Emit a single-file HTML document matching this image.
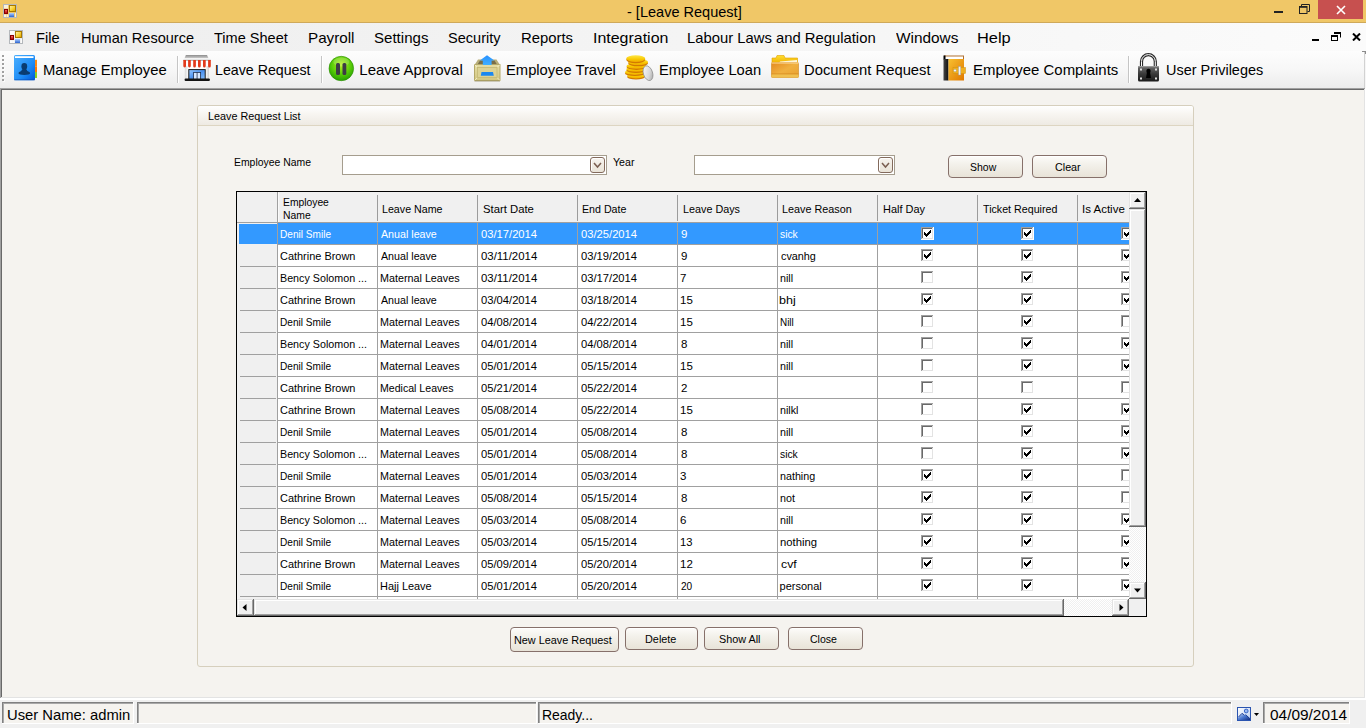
<!DOCTYPE html>
<html><head><meta charset="utf-8"><title>Leave Request</title>
<style>
html,body{margin:0;padding:0}
body{width:1366px;height:728px;overflow:hidden;position:relative;background:#f5f3ef;font-family:"Liberation Sans",sans-serif}
.t{position:absolute;white-space:pre;line-height:40px;transform-origin:0 0;font-family:"Liberation Sans",sans-serif}
</style></head><body>
<div style="position:absolute;left:0px;top:0px;width:1366px;height:22px;background:#f0c767"></div>
<div style="position:absolute;left:0px;top:22px;width:1366px;height:1px;background:#cfa95a"></div>
<svg style="position:absolute;left:3px;top:4px" width="14" height="14" viewBox="0 0 14 14">
<defs><linearGradient id="gy3" x1="0" y1="0" x2="1" y2="1"><stop offset="0" stop-color="#fff4b0"/><stop offset="0.55" stop-color="#f8d030"/><stop offset="1" stop-color="#d89c00"/></linearGradient>
<linearGradient id="gb3" x1="0" y1="0" x2="0" y2="1"><stop offset="0" stop-color="#b0d0ff"/><stop offset="1" stop-color="#2c64d0"/></linearGradient>
<linearGradient id="gr3" x1="0" y1="0" x2="0" y2="1"><stop offset="0" stop-color="#ff7070"/><stop offset="1" stop-color="#a80000"/></linearGradient></defs>
<rect x="0.5" y="0.5" width="13" height="13" fill="#ecc670" stroke="#b4b8bc" stroke-width="1"/>
<rect x="1" y="1" width="4" height="3.5" fill="#fff" opacity="0.75"/>
<rect x="1" y="10.5" width="2.5" height="2.5" fill="#fff" opacity="0.75"/><rect x="4" y="10.5" width="1.3" height="2.5" fill="#fff" opacity="0.75"/>
<rect x="12" y="9" width="1" height="4" fill="#fff" opacity="0.75"/>
<rect x="6.5" y="1.5" width="6" height="6" fill="url(#gy3)" stroke="#a87800" stroke-width="1"/>
<rect x="1.5" y="5.5" width="3" height="4" fill="url(#gr3)" stroke="#880000" stroke-width="1"/>
<rect x="6" y="9" width="5" height="4" fill="url(#gb3)"/>
</svg>
<div style="position:absolute;left:1274px;top:11px;width:9px;height:2px;background:#222"></div>
<svg style="position:absolute;left:1299px;top:4px" width="11" height="10" viewBox="0 0 11 10">
<path d="M2.5 2 V0.5 H10.5 V7.5 H8.5" fill="none" stroke="#222" stroke-width="1"/>
<rect x="0.5" y="2.5" width="7.5" height="7" fill="none" stroke="#222" stroke-width="1"/><rect x="0.5" y="2.5" width="7.5" height="1.3" fill="#222"/>
</svg>
<div style="position:absolute;left:1318px;top:0px;width:45px;height:19px;background:#c7504f"></div>
<svg style="position:absolute;left:1336px;top:5px" width="10" height="10" viewBox="0 0 10 10">
<path d="M1 1 L9 9 M9 1 L1 9" stroke="#fff" stroke-width="1.6"/></svg>
<div style="position:absolute;left:0px;top:23px;width:1366px;height:28px;background:linear-gradient(to right,#eeeeee,#f4f4f4 50%,#fbfbfb)"></div>
<svg style="position:absolute;left:9px;top:30px" width="14" height="14" viewBox="0 0 14 14">
<defs><linearGradient id="gy9" x1="0" y1="0" x2="1" y2="1"><stop offset="0" stop-color="#fff4b0"/><stop offset="0.55" stop-color="#f8d030"/><stop offset="1" stop-color="#d89c00"/></linearGradient>
<linearGradient id="gb9" x1="0" y1="0" x2="0" y2="1"><stop offset="0" stop-color="#b0d0ff"/><stop offset="1" stop-color="#2c64d0"/></linearGradient>
<linearGradient id="gr9" x1="0" y1="0" x2="0" y2="1"><stop offset="0" stop-color="#ff7070"/><stop offset="1" stop-color="#a80000"/></linearGradient></defs>
<rect x="0.5" y="0.5" width="13" height="13" fill="#efefef" stroke="#b4b8bc" stroke-width="1"/>
<rect x="1" y="1" width="4" height="3.5" fill="#fff" opacity="0.75"/>
<rect x="1" y="10.5" width="2.5" height="2.5" fill="#fff" opacity="0.75"/><rect x="4" y="10.5" width="1.3" height="2.5" fill="#fff" opacity="0.75"/>
<rect x="12" y="9" width="1" height="4" fill="#fff" opacity="0.75"/>
<rect x="6.5" y="1.5" width="6" height="6" fill="url(#gy9)" stroke="#a87800" stroke-width="1"/>
<rect x="1.5" y="5.5" width="3" height="4" fill="url(#gr9)" stroke="#880000" stroke-width="1"/>
<rect x="6" y="9" width="5" height="4" fill="url(#gb9)"/>
</svg>
<div style="position:absolute;left:1312px;top:39px;width:7px;height:2px;background:#000"></div>
<svg style="position:absolute;left:1331px;top:32px" width="10" height="9" viewBox="0 0 10 9">
<path d="M3 0.5 H9.5 V5.5" fill="none" stroke="#000" stroke-width="1"/><rect x="3" y="0" width="7" height="2" fill="#000"/>
<rect x="0.5" y="3.5" width="6" height="5" fill="none" stroke="#000" stroke-width="1"/><rect x="0" y="3" width="7" height="2" fill="#000"/>
</svg>
<svg style="position:absolute;left:1352px;top:33px" width="9" height="8" viewBox="0 0 9 8">
<path d="M1 0.5 L8 7.5 M8 0.5 L1 7.5" stroke="#000" stroke-width="2"/></svg>
<div style="position:absolute;left:0;top:51px;width:1365px;height:37px;background:linear-gradient(#fdfdfd,#f7f7f7 50%,#ececec);border-top-right-radius:3px"></div>
<div style="position:absolute;left:0px;top:88px;width:1366px;height:1px;background:#a0a0a0"></div>
<div style="position:absolute;left:1364px;top:52px;width:1px;height:36px;background:#d2d2d2"></div>
<div style="position:absolute;left:1365px;top:54px;width:1px;height:34px;background:#f6f6f6"></div>
<div style="position:absolute;left:1362px;top:51px;width:4px;height:1px;background:#8c8c8c"></div>
<div style="position:absolute;left:1365px;top:51px;width:1px;height:3px;background:#8c8c8c"></div>
<div style="position:absolute;left:2px;top:55px;width:2px;height:2px;background:#a0a0a0"></div>
<div style="position:absolute;left:3px;top:56px;width:2px;height:2px;background:#fff;opacity:.7"></div>
<div style="position:absolute;left:2px;top:55px;width:2px;height:2px;background:#a0a0a0"></div>
<div style="position:absolute;left:2px;top:59px;width:2px;height:2px;background:#a0a0a0"></div>
<div style="position:absolute;left:3px;top:60px;width:2px;height:2px;background:#fff;opacity:.7"></div>
<div style="position:absolute;left:2px;top:59px;width:2px;height:2px;background:#a0a0a0"></div>
<div style="position:absolute;left:2px;top:63px;width:2px;height:2px;background:#a0a0a0"></div>
<div style="position:absolute;left:3px;top:64px;width:2px;height:2px;background:#fff;opacity:.7"></div>
<div style="position:absolute;left:2px;top:63px;width:2px;height:2px;background:#a0a0a0"></div>
<div style="position:absolute;left:2px;top:67px;width:2px;height:2px;background:#a0a0a0"></div>
<div style="position:absolute;left:3px;top:68px;width:2px;height:2px;background:#fff;opacity:.7"></div>
<div style="position:absolute;left:2px;top:67px;width:2px;height:2px;background:#a0a0a0"></div>
<div style="position:absolute;left:2px;top:71px;width:2px;height:2px;background:#a0a0a0"></div>
<div style="position:absolute;left:3px;top:72px;width:2px;height:2px;background:#fff;opacity:.7"></div>
<div style="position:absolute;left:2px;top:71px;width:2px;height:2px;background:#a0a0a0"></div>
<div style="position:absolute;left:2px;top:75px;width:2px;height:2px;background:#a0a0a0"></div>
<div style="position:absolute;left:3px;top:76px;width:2px;height:2px;background:#fff;opacity:.7"></div>
<div style="position:absolute;left:2px;top:75px;width:2px;height:2px;background:#a0a0a0"></div>
<div style="position:absolute;left:2px;top:79px;width:2px;height:2px;background:#a0a0a0"></div>
<div style="position:absolute;left:3px;top:80px;width:2px;height:2px;background:#fff;opacity:.7"></div>
<div style="position:absolute;left:2px;top:79px;width:2px;height:2px;background:#a0a0a0"></div>
<div style="position:absolute;left:177px;top:56px;width:1px;height:27px;background:#c5c5c5"></div>
<div style="position:absolute;left:178px;top:56px;width:1px;height:27px;background:#fff"></div>
<div style="position:absolute;left:321px;top:56px;width:1px;height:27px;background:#c5c5c5"></div>
<div style="position:absolute;left:322px;top:56px;width:1px;height:27px;background:#fff"></div>
<div style="position:absolute;left:1128px;top:56px;width:1px;height:27px;background:#c5c5c5"></div>
<div style="position:absolute;left:1129px;top:56px;width:1px;height:27px;background:#fff"></div>
<svg style="position:absolute;left:13px;top:54px" width="26" height="28" viewBox="0 0 26 28">
<defs><linearGradient id="bk1" x1="0" y1="0" x2="1" y2="1"><stop offset="0" stop-color="#4cb0ff"/><stop offset="0.6" stop-color="#1e8cf5"/><stop offset="1" stop-color="#0058d8"/></linearGradient></defs>
<rect x="21.8" y="5.8" width="2.2" height="6.5" fill="#ff8a10"/><rect x="21.8" y="12.3" width="2.2" height="5.8" fill="#ff7a00"/><rect x="21.8" y="18" width="2.2" height="6" fill="#8cd020"/>
<rect x="1" y="1" width="21" height="25.3" rx="1.5" fill="url(#bk1)"/>
<rect x="2" y="2.2" width="18.5" height="1.8" fill="#fff"/>
<rect x="1" y="25.3" width="21" height="1" fill="#0a48b0" opacity="0.6"/>
<ellipse cx="11.3" cy="12.4" rx="2.9" ry="3.3" fill="#0a3c70"/>
<path d="M11.3 14.8 C9 14.8 8.6 16.2 8.3 17 C6.8 17.5 5.5 18.3 5.5 19.3 C5.5 20.3 8 20.9 11.3 20.9 C14.6 20.9 17.1 20.3 17.1 19.3 C17.1 18.3 15.8 17.5 14.3 17 C14 16.2 13.6 14.8 11.3 14.8 Z" fill="#0a3c70"/>
</svg>
<svg style="position:absolute;left:183px;top:55px" width="28" height="27" viewBox="0 0 28 27">
<defs><linearGradient id="st1" x1="0" y1="0" x2="0" y2="1"><stop offset="0" stop-color="#8c8c8c"/><stop offset="1" stop-color="#cfcfcf"/></linearGradient>
<linearGradient id="st2" x1="0" y1="0" x2="1" y2="1"><stop offset="0" stop-color="#9ccbff"/><stop offset="0.5" stop-color="#4a90ee"/><stop offset="1" stop-color="#8cc4ff"/></linearGradient>
<linearGradient id="st3" x1="0" y1="0" x2="1" y2="0"><stop offset="0" stop-color="#d8d8d8"/><stop offset="0.15" stop-color="#ffffff"/><stop offset="0.85" stop-color="#ffffff"/><stop offset="1" stop-color="#d0d0d0"/></linearGradient></defs>
<path d="M2.9 0 H24 L25.5 3.3 H1.5 Z" fill="url(#st1)"/>
<rect x="1" y="3.3" width="26" height="1.4" fill="#f4f4f4"/>
<rect x="1.8" y="11" width="24.2" height="13" fill="url(#st3)"/>
<rect x="0.3" y="4.7" width="27.5" height="6.3" fill="#ffffff"/>
<rect x="0.3" y="4.7" width="27.5" height="1.3" fill="#9a9a9a" opacity="0.7"/>
<path d="M0.3 5 h2.7 v6 a1.35 1.5 0 0 1 -2.7 0 Z" fill="#e23a1c"/><path d="M5.1 5 h2.7 v6 a1.35 1.5 0 0 1 -2.7 0 Z" fill="#e23a1c"/><path d="M10.2 5 h2.7 v6 a1.35 1.5 0 0 1 -2.7 0 Z" fill="#e23a1c"/><path d="M15.0 5 h2.7 v6 a1.35 1.5 0 0 1 -2.7 0 Z" fill="#e23a1c"/><path d="M20.0 5 h2.7 v6 a1.35 1.5 0 0 1 -2.7 0 Z" fill="#e23a1c"/><path d="M25.1 5 h2.7 v6 a1.35 1.5 0 0 1 -2.7 0 Z" fill="#e23a1c"/>
<rect x="5.8" y="14.6" width="16.4" height="10" fill="url(#st2)" stroke="#1a1a1a" stroke-width="1"/>
<rect x="10.6" y="17.4" width="7" height="7.2" fill="#d8e8ff" stroke="#203050" stroke-width="0.8"/>
<path d="M14.1 17.4 V24.6" stroke="#203050" stroke-width="0.8"/>
<rect x="1.6" y="23.4" width="25.3" height="2.6" rx="1" fill="#141414"/>
</svg>
<svg style="position:absolute;left:327px;top:54px" width="28" height="28" viewBox="0 0 28 28">
<defs><radialGradient id="gp1" cx="0.5" cy="0.35" r="0.7"><stop offset="0" stop-color="#b8f020"/><stop offset="0.55" stop-color="#58cc08"/><stop offset="1" stop-color="#1c9a00"/></radialGradient></defs>
<ellipse cx="14.3" cy="14.5" rx="12.3" ry="12.2" fill="url(#gp1)" stroke="#2a8c00" stroke-width="0.6"/>
<ellipse cx="14.3" cy="8" rx="8" ry="4.5" fill="#fff" opacity="0.18"/>
<rect x="9" y="9" width="4" height="12" rx="1.5" fill="#3c3c44"/>
<rect x="15.5" y="9" width="3.8" height="12" rx="1.5" fill="#3c3c44"/>
</svg>
<svg style="position:absolute;left:474px;top:55px" width="27" height="27" viewBox="0 0 27 27">
<defs><linearGradient id="tb1" x1="0" y1="0" x2="0" y2="1"><stop offset="0" stop-color="#e6dea4"/><stop offset="1" stop-color="#d2c680"/></linearGradient>
<linearGradient id="tb2" x1="0" y1="0" x2="0" y2="1"><stop offset="0" stop-color="#2890ff"/><stop offset="1" stop-color="#40b0ff"/></linearGradient></defs>
<path d="M4 4.5 L0.5 10 H26 L22.5 4.5 Z" fill="#b8ae78"/>
<path d="M6 5.5 L3.5 9.5 H23 L20.5 5.5 Z" fill="#7a6e48"/>
<rect x="0.5" y="9.5" width="25.5" height="16" fill="url(#tb1)" stroke="#b4a868" stroke-width="1"/>
<path d="M0.5 9.5 L3.5 12.5 M26 9.5 L23 12.5 M0.5 25.5 L3.5 22.5 M26 25.5 L23 22.5" stroke="#f4f0d0" stroke-width="0.8"/>
<rect x="3.5" y="12.5" width="19.5" height="10" fill="#dcd294" stroke="#c4b874" stroke-width="0.8"/>
<path d="M13 0.2 L20.4 5.6 H17.6 V10 H8.8 V5.6 H5.8 Z" fill="url(#tb2)"/>
<path d="M7.5 17 H19 L19.8 20.8 H6.8 Z" fill="#1a88f0"/>
<rect x="0.5" y="25.5" width="25.5" height="1.2" fill="#8a8058" opacity="0.5"/>
</svg>
<svg style="position:absolute;left:624px;top:54px" width="31" height="29" viewBox="0 0 31 29">
<defs><linearGradient id="cg1" x1="0" y1="0" x2="0" y2="1"><stop offset="0" stop-color="#ffe84a"/><stop offset="0.6" stop-color="#f8c800"/><stop offset="1" stop-color="#f0a800"/></linearGradient>
<linearGradient id="cs1" x1="0" y1="0" x2="1" y2="1"><stop offset="0" stop-color="#ffffff"/><stop offset="0.6" stop-color="#d8d8d8"/><stop offset="1" stop-color="#9a9a9a"/></linearGradient></defs>
<ellipse cx="12" cy="22.9" rx="8.8" ry="2.7" fill="#d27a00"/><ellipse cx="12" cy="21.7" rx="8.8" ry="2.7" fill="url(#cg1)"/><ellipse cx="10.9" cy="19.4" rx="9.9" ry="2.7" fill="#d27a00"/><ellipse cx="10.9" cy="18.2" rx="9.9" ry="2.7" fill="url(#cg1)"/><ellipse cx="12" cy="16.3" rx="9.7" ry="2.7" fill="#d27a00"/><ellipse cx="12" cy="15.1" rx="9.7" ry="2.7" fill="url(#cg1)"/><ellipse cx="12.5" cy="13.1" rx="10" ry="2.8" fill="#d27a00"/><ellipse cx="12.5" cy="11.9" rx="10" ry="2.8" fill="url(#cg1)"/><ellipse cx="14.1" cy="9.2" rx="9.9" ry="3.1" fill="#d27a00"/><ellipse cx="14.1" cy="8" rx="9.9" ry="3.1" fill="url(#cg1)"/><ellipse cx="11.75" cy="5.8" rx="9.5" ry="3.4" fill="#d27a00"/><ellipse cx="11.75" cy="4.6" rx="9.5" ry="3.4" fill="url(#cg1)"/>
<ellipse cx="24" cy="19.2" rx="4.6" ry="7.6" transform="rotate(-18 24 19.2)" fill="url(#cs1)" stroke="#8a8a8a" stroke-width="0.7"/>
</svg>
<svg style="position:absolute;left:771px;top:55px" width="28" height="24" viewBox="0 0 28 24">
<defs><linearGradient id="fd1" x1="0" y1="0" x2="0" y2="1"><stop offset="0" stop-color="#ffe030"/><stop offset="1" stop-color="#f0b000"/></linearGradient>
<linearGradient id="fd2" x1="0" y1="0" x2="1" y2="1"><stop offset="0" stop-color="#e48a20"/><stop offset="0.5" stop-color="#f0b040"/><stop offset="1" stop-color="#e8a030"/></linearGradient></defs>
<path d="M1 3 H5 L6 0.5 H13 L14 3 H26.5 V8 H1 Z" fill="url(#fd1)" stroke="#e0a000" stroke-width="0.6"/>
<path d="M9 6.5 L26 5 V8 H8 Z" fill="#fff" opacity="0.85"/>
<rect x="0.5" y="7.5" width="27" height="15" rx="1" fill="url(#fd2)" stroke="#d08820" stroke-width="0.6"/>
<rect x="0.5" y="7.5" width="27" height="1" fill="#ffe0a0"/>
<rect x="0.5" y="18.5" width="27" height="1" fill="#c87810" opacity="0.6"/>
<rect x="0.5" y="19.5" width="27" height="3" fill="#f0c050"/>
</svg>
<svg style="position:absolute;left:943px;top:55px" width="24" height="27" viewBox="0 0 24 27">
<defs><linearGradient id="cb1" x1="0" y1="0" x2="1" y2="1"><stop offset="0" stop-color="#f8c030"/><stop offset="1" stop-color="#e07800"/></linearGradient>
<linearGradient id="cb2" x1="0" y1="0" x2="1" y2="0"><stop offset="0" stop-color="#444"/><stop offset="1" stop-color="#111"/></linearGradient></defs>
<rect x="1" y="0.5" width="20" height="4" fill="#b07030"/>
<rect x="2" y="1.5" width="18" height="2.5" fill="#fff"/>
<rect x="0.5" y="0.5" width="2" height="4" fill="#000"/>
<rect x="0.5" y="4" width="5" height="21.5" fill="url(#cb2)"/>
<rect x="5.5" y="4" width="15.5" height="21.5" fill="url(#cb1)"/>
<rect x="10" y="12.5" width="12.5" height="6" fill="#f0b020" stroke="#d09010" stroke-width="0.5"/>
<circle cx="12" cy="15.5" r="1.3" fill="#fff" stroke="#888" stroke-width="0.4"/>
<rect x="15.5" y="11.5" width="2.2" height="8.5" fill="#f4f4f4" stroke="#999" stroke-width="0.4"/>
</svg>
<svg style="position:absolute;left:1137px;top:53px" width="23" height="29" viewBox="0 0 23 29">
<defs><linearGradient id="lk1" x1="0" y1="0" x2="0" y2="1"><stop offset="0" stop-color="#707070"/><stop offset="0.5" stop-color="#3a3a3a"/><stop offset="1" stop-color="#1a1a1a"/></linearGradient></defs>
<path d="M4.5 13 V8.5 A6.8 6.8 0 0 1 18.3 8.5 V13" fill="none" stroke="#2a2a2a" stroke-width="3.2"/>
<path d="M4.5 13 V8.5 A6.8 6.8 0 0 1 18.3 8.5 V13" fill="none" stroke="#fff" stroke-width="1"/>
<rect x="1" y="13" width="21" height="15.5" rx="1.5" fill="url(#lk1)"/>
<rect x="1" y="13" width="21" height="1.2" fill="#999"/>
<rect x="3" y="15.5" width="2" height="2" fill="#ddd"/><rect x="18" y="15.5" width="2" height="2" fill="#ddd"/>
<rect x="3" y="24.5" width="2" height="2" fill="#ddd"/><rect x="18" y="24.5" width="2" height="2" fill="#ddd"/>
<circle cx="11.5" cy="18" r="2.2" fill="#000"/><path d="M10 19 L9 25 H14 L13 19 Z" fill="#000"/>
</svg>
<div style="position:absolute;left:0px;top:89px;width:1366px;height:610px;background:#f5f3ef"></div>
<div style="position:absolute;left:0px;top:88px;width:1365px;height:1px;background:#a0a0a0"></div>
<div style="position:absolute;left:0px;top:88px;width:1px;height:610px;background:#a0a0a0"></div>
<div style="position:absolute;left:1px;top:89px;width:1364px;height:1px;background:#696969"></div>
<div style="position:absolute;left:1px;top:89px;width:1px;height:608px;background:#696969"></div>
<div style="position:absolute;left:1365px;top:88px;width:1px;height:611px;background:#fff"></div>
<div style="position:absolute;left:0px;top:698px;width:1366px;height:2px;background:#fff"></div>
<div style="position:absolute;left:1364px;top:89px;width:1px;height:609px;background:#e3e3e3"></div>
<div style="position:absolute;left:1px;top:697px;width:1364px;height:1px;background:#e3e3e3"></div>
<div style="position:absolute;left:197px;top:105px;width:995px;height:560px;border:1px solid #d6cfbd;border-radius:3px;background:#f5f3ef"></div>
<div style="position:absolute;left:198px;top:106px;width:995px;height:19px;border-radius:2px 2px 0 0;background:linear-gradient(#ffffff,#f8f6f2 40%,#eeeae3)"></div>
<div style="position:absolute;left:198px;top:125px;width:995px;height:1px;background:#ddd5c2"></div>
<div style="position:absolute;left:342px;top:155px;width:263px;height:18px;border:1px solid #a59d8e;background:#fff"></div>
<div style="position:absolute;left:590px;top:157px;width:13px;height:14px;border:1px solid #836a5c;border-radius:3px;background:linear-gradient(#f6f3ee,#e9e3d7);box-shadow:inset 1px 1px 0 #fff"></div>
<svg style="position:absolute;left:593px;top:162px" width="10" height="7" viewBox="0 0 10 7"><path d="M1 1 L4.5 5 L8 1" fill="none" stroke="#7a5e50" stroke-width="1.5"/></svg>
<div style="position:absolute;left:694px;top:155px;width:199px;height:18px;border:1px solid #a59d8e;background:#fff"></div>
<div style="position:absolute;left:878px;top:157px;width:13px;height:14px;border:1px solid #836a5c;border-radius:3px;background:linear-gradient(#f6f3ee,#e9e3d7);box-shadow:inset 1px 1px 0 #fff"></div>
<svg style="position:absolute;left:881px;top:162px" width="10" height="7" viewBox="0 0 10 7"><path d="M1 1 L4.5 5 L8 1" fill="none" stroke="#7a5e50" stroke-width="1.5"/></svg>
<div style="position:absolute;left:948px;top:155px;width:73px;height:21px;border:1px solid #86706a;border-radius:4px;background:linear-gradient(#fdfcfa,#f4f2ec 35%,#e8e3d8);box-shadow:inset 0 1px 0 #fff"></div>
<div style="position:absolute;left:1032px;top:155px;width:73px;height:21px;border:1px solid #86706a;border-radius:4px;background:linear-gradient(#fdfcfa,#f4f2ec 35%,#e8e3d8);box-shadow:inset 0 1px 0 #fff"></div>
<div style="position:absolute;left:510px;top:627px;width:107px;height:23px;border:1px solid #86706a;border-radius:4px;background:linear-gradient(#fdfcfa,#f4f2ec 35%,#e8e3d8);box-shadow:inset 0 1px 0 #fff"></div>
<div style="position:absolute;left:625px;top:627px;width:71px;height:21px;border:1px solid #86706a;border-radius:4px;background:linear-gradient(#fdfcfa,#f4f2ec 35%,#e8e3d8);box-shadow:inset 0 1px 0 #fff"></div>
<div style="position:absolute;left:704px;top:627px;width:73px;height:21px;border:1px solid #86706a;border-radius:4px;background:linear-gradient(#fdfcfa,#f4f2ec 35%,#e8e3d8);box-shadow:inset 0 1px 0 #fff"></div>
<div style="position:absolute;left:788px;top:627px;width:73px;height:21px;border:1px solid #86706a;border-radius:4px;background:linear-gradient(#fdfcfa,#f4f2ec 35%,#e8e3d8);box-shadow:inset 0 1px 0 #fff"></div>
<div style="position:absolute;left:236px;top:191px;width:911px;height:426px;background:#000"></div>
<div style="position:absolute;left:237px;top:192px;width:909px;height:424px;background:#fff"></div>
<div style="position:absolute;left:237px;top:192px;width:892px;height:407px;overflow:hidden">
<div style="position:absolute;left:0px;top:0px;width:1000px;height:30px;background:#f0f0f0"></div>
<div style="position:absolute;left:0px;top:30px;width:1000px;height:1px;background:#a0a0a0"></div>
<div style="position:absolute;left:40px;top:0px;width:1px;height:30px;background:#a0a0a0"></div>
<div style="position:absolute;left:41px;top:0px;width:1px;height:30px;background:#fafafa"></div>
<div style="position:absolute;left:140px;top:3px;width:1px;height:26px;background:#9c9c9c"></div>
<div style="position:absolute;left:240px;top:3px;width:1px;height:26px;background:#9c9c9c"></div>
<div style="position:absolute;left:340px;top:3px;width:1px;height:26px;background:#9c9c9c"></div>
<div style="position:absolute;left:440px;top:3px;width:1px;height:26px;background:#9c9c9c"></div>
<div style="position:absolute;left:540px;top:3px;width:1px;height:26px;background:#9c9c9c"></div>
<div style="position:absolute;left:640px;top:3px;width:1px;height:26px;background:#9c9c9c"></div>
<div style="position:absolute;left:740px;top:3px;width:1px;height:26px;background:#9c9c9c"></div>
<div style="position:absolute;left:840px;top:3px;width:1px;height:26px;background:#9c9c9c"></div>
<div class="t" style="left:45.86px;top:-10px;font-size:11px;color:#000;transform:scaleX(0.9375)">Employee</div>
<div class="t" style="left:45.86px;top:3px;font-size:11px;color:#000;transform:scaleX(0.9429)">Name</div>
<div class="t" style="left:145.13px;top:-3px;font-size:11px;color:#000;transform:scaleX(0.9705)">Leave Name</div>
<div class="t" style="left:245.57px;top:-3px;font-size:11px;color:#000;transform:scaleX(1.0271)">Start Date</div>
<div class="t" style="left:345.43px;top:-3px;font-size:11px;color:#000;transform:scaleX(0.9689)">End Date</div>
<div class="t" style="left:445.62px;top:-3px;font-size:11px;color:#000;transform:scaleX(0.9807)">Leave Days</div>
<div class="t" style="left:545.42px;top:-3px;font-size:11px;color:#000;transform:scaleX(0.9826)">Leave Reason</div>
<div class="t" style="left:645.50px;top:-3px;font-size:11px;color:#000;transform:scaleX(0.9951)">Half Day</div>
<div class="t" style="left:746.20px;top:-3px;font-size:11px;color:#000;transform:scaleX(0.9711)">Ticket Required</div>
<div class="t" style="left:845.25px;top:-3px;font-size:11px;color:#000;transform:scaleX(1.0450)">Is Active</div>
<div style="position:absolute;left:0px;top:31px;width:40px;height:380px;background:#f0f0f0"></div>
<div style="position:absolute;left:41px;top:31px;width:900px;height:21px;background:#3399ff"></div>
<div style="position:absolute;left:2px;top:32px;width:38px;height:20px;background:#3399ff"></div>
<div style="position:absolute;left:41px;top:52px;width:900px;height:1px;background:#a0a0a0"></div>
<div style="position:absolute;left:40px;top:31px;width:1px;height:22px;background:#a0a0a0"></div>
<div style="position:absolute;left:140px;top:31px;width:1px;height:22px;background:#a0a0a0"></div>
<div style="position:absolute;left:240px;top:31px;width:1px;height:22px;background:#a0a0a0"></div>
<div style="position:absolute;left:340px;top:31px;width:1px;height:22px;background:#a0a0a0"></div>
<div style="position:absolute;left:440px;top:31px;width:1px;height:22px;background:#a0a0a0"></div>
<div style="position:absolute;left:540px;top:31px;width:1px;height:22px;background:#a0a0a0"></div>
<div style="position:absolute;left:640px;top:31px;width:1px;height:22px;background:#a0a0a0"></div>
<div style="position:absolute;left:740px;top:31px;width:1px;height:22px;background:#a0a0a0"></div>
<div style="position:absolute;left:840px;top:31px;width:1px;height:22px;background:#a0a0a0"></div>
<div class="t" style="left:42.78px;top:22px;font-size:11px;color:#fff;transform:scaleX(0.9167)">Denil Smile</div>
<div class="t" style="left:143.50px;top:22px;font-size:11px;color:#fff;transform:scaleX(0.9702)">Anual leave</div>
<div class="t" style="left:243.80px;top:22px;font-size:11px;color:#fff;transform:scaleX(1.0182)">03/17/2014</div>
<div class="t" style="left:343.80px;top:22px;font-size:11px;color:#fff;transform:scaleX(1.0182)">03/25/2014</div>
<div class="t" style="left:444.30px;top:22px;font-size:11px;color:#fff;transform:scaleX(1.0450)">9</div>
<div class="t" style="left:542.66px;top:22px;font-size:11px;color:#fff;transform:scaleX(0.9389)">sick</div>
<svg style="position:absolute;left:684px;top:35px" width="13" height="13" viewBox="0 0 13 13">
<rect x="0" y="0" width="13" height="13" fill="#fff"/>
<rect x="0" y="0" width="12" height="1" fill="#a0a0a0"/><rect x="0" y="0" width="1" height="12" fill="#a0a0a0"/>
<rect x="1" y="1" width="10" height="1" fill="#696969"/><rect x="1" y="1" width="1" height="10" fill="#696969"/>
<rect x="1" y="11" width="11" height="1" fill="#e3e3e3"/><rect x="11" y="1" width="1" height="11" fill="#e3e3e3"/>
<g transform="translate(3,3)"><path d="M0 2h1v3h-1zM1 3h1v3h-1zM2 4h1v3h-1zM3 3h1v3h-1zM4 2h1v3h-1zM5 1h1v3h-1zM6 0h1v3h-1z" fill="#000"/></g>
</svg>
<svg style="position:absolute;left:784px;top:35px" width="13" height="13" viewBox="0 0 13 13">
<rect x="0" y="0" width="13" height="13" fill="#fff"/>
<rect x="0" y="0" width="12" height="1" fill="#a0a0a0"/><rect x="0" y="0" width="1" height="12" fill="#a0a0a0"/>
<rect x="1" y="1" width="10" height="1" fill="#696969"/><rect x="1" y="1" width="1" height="10" fill="#696969"/>
<rect x="1" y="11" width="11" height="1" fill="#e3e3e3"/><rect x="11" y="1" width="1" height="11" fill="#e3e3e3"/>
<g transform="translate(3,3)"><path d="M0 2h1v3h-1zM1 3h1v3h-1zM2 4h1v3h-1zM3 3h1v3h-1zM4 2h1v3h-1zM5 1h1v3h-1zM6 0h1v3h-1z" fill="#000"/></g>
</svg>
<svg style="position:absolute;left:884px;top:35px" width="13" height="13" viewBox="0 0 13 13">
<rect x="0" y="0" width="13" height="13" fill="#fff"/>
<rect x="0" y="0" width="12" height="1" fill="#a0a0a0"/><rect x="0" y="0" width="1" height="12" fill="#a0a0a0"/>
<rect x="1" y="1" width="10" height="1" fill="#696969"/><rect x="1" y="1" width="1" height="10" fill="#696969"/>
<rect x="1" y="11" width="11" height="1" fill="#e3e3e3"/><rect x="11" y="1" width="1" height="11" fill="#e3e3e3"/>
<g transform="translate(3,3)"><path d="M0 2h1v3h-1zM1 3h1v3h-1zM2 4h1v3h-1zM3 3h1v3h-1zM4 2h1v3h-1zM5 1h1v3h-1zM6 0h1v3h-1z" fill="#000"/></g>
</svg>
<div style="position:absolute;left:41px;top:74px;width:900px;height:1px;background:#a0a0a0"></div>
<div style="position:absolute;left:3px;top:74px;width:36px;height:1px;background:#a0a0a0"></div>
<div style="position:absolute;left:40px;top:53px;width:1px;height:22px;background:#a0a0a0"></div>
<div style="position:absolute;left:140px;top:53px;width:1px;height:22px;background:#a0a0a0"></div>
<div style="position:absolute;left:240px;top:53px;width:1px;height:22px;background:#a0a0a0"></div>
<div style="position:absolute;left:340px;top:53px;width:1px;height:22px;background:#a0a0a0"></div>
<div style="position:absolute;left:440px;top:53px;width:1px;height:22px;background:#a0a0a0"></div>
<div style="position:absolute;left:540px;top:53px;width:1px;height:22px;background:#a0a0a0"></div>
<div style="position:absolute;left:640px;top:53px;width:1px;height:22px;background:#a0a0a0"></div>
<div style="position:absolute;left:740px;top:53px;width:1px;height:22px;background:#a0a0a0"></div>
<div style="position:absolute;left:840px;top:53px;width:1px;height:22px;background:#a0a0a0"></div>
<div class="t" style="left:42.71px;top:44px;font-size:11px;color:#000;transform:scaleX(0.9946)">Cathrine Brown</div>
<div class="t" style="left:143.50px;top:44px;font-size:11px;color:#000;transform:scaleX(0.9702)">Anual leave</div>
<div class="t" style="left:243.80px;top:44px;font-size:11px;color:#000;transform:scaleX(1.0370)">03/11/2014</div>
<div class="t" style="left:343.80px;top:44px;font-size:11px;color:#000;transform:scaleX(1.0182)">03/19/2014</div>
<div class="t" style="left:444.30px;top:44px;font-size:11px;color:#000;transform:scaleX(1.0450)">9</div>
<div class="t" style="left:543.60px;top:44px;font-size:11px;color:#000;transform:scaleX(0.9829)">cvanhg</div>
<svg style="position:absolute;left:684px;top:57px" width="13" height="13" viewBox="0 0 13 13">
<rect x="0" y="0" width="13" height="13" fill="#fff"/>
<rect x="0" y="0" width="12" height="1" fill="#a0a0a0"/><rect x="0" y="0" width="1" height="12" fill="#a0a0a0"/>
<rect x="1" y="1" width="10" height="1" fill="#696969"/><rect x="1" y="1" width="1" height="10" fill="#696969"/>
<rect x="1" y="11" width="11" height="1" fill="#e3e3e3"/><rect x="11" y="1" width="1" height="11" fill="#e3e3e3"/>
<g transform="translate(3,3)"><path d="M0 2h1v3h-1zM1 3h1v3h-1zM2 4h1v3h-1zM3 3h1v3h-1zM4 2h1v3h-1zM5 1h1v3h-1zM6 0h1v3h-1z" fill="#000"/></g>
</svg>
<svg style="position:absolute;left:784px;top:57px" width="13" height="13" viewBox="0 0 13 13">
<rect x="0" y="0" width="13" height="13" fill="#fff"/>
<rect x="0" y="0" width="12" height="1" fill="#a0a0a0"/><rect x="0" y="0" width="1" height="12" fill="#a0a0a0"/>
<rect x="1" y="1" width="10" height="1" fill="#696969"/><rect x="1" y="1" width="1" height="10" fill="#696969"/>
<rect x="1" y="11" width="11" height="1" fill="#e3e3e3"/><rect x="11" y="1" width="1" height="11" fill="#e3e3e3"/>
<g transform="translate(3,3)"><path d="M0 2h1v3h-1zM1 3h1v3h-1zM2 4h1v3h-1zM3 3h1v3h-1zM4 2h1v3h-1zM5 1h1v3h-1zM6 0h1v3h-1z" fill="#000"/></g>
</svg>
<svg style="position:absolute;left:884px;top:57px" width="13" height="13" viewBox="0 0 13 13">
<rect x="0" y="0" width="13" height="13" fill="#fff"/>
<rect x="0" y="0" width="12" height="1" fill="#a0a0a0"/><rect x="0" y="0" width="1" height="12" fill="#a0a0a0"/>
<rect x="1" y="1" width="10" height="1" fill="#696969"/><rect x="1" y="1" width="1" height="10" fill="#696969"/>
<rect x="1" y="11" width="11" height="1" fill="#e3e3e3"/><rect x="11" y="1" width="1" height="11" fill="#e3e3e3"/>
<g transform="translate(3,3)"><path d="M0 2h1v3h-1zM1 3h1v3h-1zM2 4h1v3h-1zM3 3h1v3h-1zM4 2h1v3h-1zM5 1h1v3h-1zM6 0h1v3h-1z" fill="#000"/></g>
</svg>
<div style="position:absolute;left:41px;top:96px;width:900px;height:1px;background:#a0a0a0"></div>
<div style="position:absolute;left:3px;top:96px;width:36px;height:1px;background:#a0a0a0"></div>
<div style="position:absolute;left:40px;top:75px;width:1px;height:22px;background:#a0a0a0"></div>
<div style="position:absolute;left:140px;top:75px;width:1px;height:22px;background:#a0a0a0"></div>
<div style="position:absolute;left:240px;top:75px;width:1px;height:22px;background:#a0a0a0"></div>
<div style="position:absolute;left:340px;top:75px;width:1px;height:22px;background:#a0a0a0"></div>
<div style="position:absolute;left:440px;top:75px;width:1px;height:22px;background:#a0a0a0"></div>
<div style="position:absolute;left:540px;top:75px;width:1px;height:22px;background:#a0a0a0"></div>
<div style="position:absolute;left:640px;top:75px;width:1px;height:22px;background:#a0a0a0"></div>
<div style="position:absolute;left:740px;top:75px;width:1px;height:22px;background:#a0a0a0"></div>
<div style="position:absolute;left:840px;top:75px;width:1px;height:22px;background:#a0a0a0"></div>
<div class="t" style="left:42.72px;top:66px;font-size:11px;color:#000;transform:scaleX(0.9750)">Bency Solomon ...</div>
<div class="t" style="left:142.52px;top:66px;font-size:11px;color:#000;transform:scaleX(0.9788)">Maternal Leaves</div>
<div class="t" style="left:243.80px;top:66px;font-size:11px;color:#000;transform:scaleX(1.0370)">03/11/2014</div>
<div class="t" style="left:343.80px;top:66px;font-size:11px;color:#000;transform:scaleX(1.0182)">03/17/2014</div>
<div class="t" style="left:443.25px;top:66px;font-size:11px;color:#000;transform:scaleX(1.0450)">7</div>
<div class="t" style="left:542.62px;top:66px;font-size:11px;color:#000;transform:scaleX(0.9750)">nill</div>
<svg style="position:absolute;left:684px;top:79px" width="13" height="13" viewBox="0 0 13 13">
<rect x="0" y="0" width="13" height="13" fill="#fff"/>
<rect x="0" y="0" width="12" height="1" fill="#a0a0a0"/><rect x="0" y="0" width="1" height="12" fill="#a0a0a0"/>
<rect x="1" y="1" width="10" height="1" fill="#696969"/><rect x="1" y="1" width="1" height="10" fill="#696969"/>
<rect x="1" y="11" width="11" height="1" fill="#e3e3e3"/><rect x="11" y="1" width="1" height="11" fill="#e3e3e3"/>

</svg>
<svg style="position:absolute;left:784px;top:79px" width="13" height="13" viewBox="0 0 13 13">
<rect x="0" y="0" width="13" height="13" fill="#fff"/>
<rect x="0" y="0" width="12" height="1" fill="#a0a0a0"/><rect x="0" y="0" width="1" height="12" fill="#a0a0a0"/>
<rect x="1" y="1" width="10" height="1" fill="#696969"/><rect x="1" y="1" width="1" height="10" fill="#696969"/>
<rect x="1" y="11" width="11" height="1" fill="#e3e3e3"/><rect x="11" y="1" width="1" height="11" fill="#e3e3e3"/>
<g transform="translate(3,3)"><path d="M0 2h1v3h-1zM1 3h1v3h-1zM2 4h1v3h-1zM3 3h1v3h-1zM4 2h1v3h-1zM5 1h1v3h-1zM6 0h1v3h-1z" fill="#000"/></g>
</svg>
<svg style="position:absolute;left:884px;top:79px" width="13" height="13" viewBox="0 0 13 13">
<rect x="0" y="0" width="13" height="13" fill="#fff"/>
<rect x="0" y="0" width="12" height="1" fill="#a0a0a0"/><rect x="0" y="0" width="1" height="12" fill="#a0a0a0"/>
<rect x="1" y="1" width="10" height="1" fill="#696969"/><rect x="1" y="1" width="1" height="10" fill="#696969"/>
<rect x="1" y="11" width="11" height="1" fill="#e3e3e3"/><rect x="11" y="1" width="1" height="11" fill="#e3e3e3"/>
<g transform="translate(3,3)"><path d="M0 2h1v3h-1zM1 3h1v3h-1zM2 4h1v3h-1zM3 3h1v3h-1zM4 2h1v3h-1zM5 1h1v3h-1zM6 0h1v3h-1z" fill="#000"/></g>
</svg>
<div style="position:absolute;left:41px;top:118px;width:900px;height:1px;background:#a0a0a0"></div>
<div style="position:absolute;left:3px;top:118px;width:36px;height:1px;background:#a0a0a0"></div>
<div style="position:absolute;left:40px;top:97px;width:1px;height:22px;background:#a0a0a0"></div>
<div style="position:absolute;left:140px;top:97px;width:1px;height:22px;background:#a0a0a0"></div>
<div style="position:absolute;left:240px;top:97px;width:1px;height:22px;background:#a0a0a0"></div>
<div style="position:absolute;left:340px;top:97px;width:1px;height:22px;background:#a0a0a0"></div>
<div style="position:absolute;left:440px;top:97px;width:1px;height:22px;background:#a0a0a0"></div>
<div style="position:absolute;left:540px;top:97px;width:1px;height:22px;background:#a0a0a0"></div>
<div style="position:absolute;left:640px;top:97px;width:1px;height:22px;background:#a0a0a0"></div>
<div style="position:absolute;left:740px;top:97px;width:1px;height:22px;background:#a0a0a0"></div>
<div style="position:absolute;left:840px;top:97px;width:1px;height:22px;background:#a0a0a0"></div>
<div class="t" style="left:42.71px;top:88px;font-size:11px;color:#000;transform:scaleX(0.9946)">Cathrine Brown</div>
<div class="t" style="left:143.50px;top:88px;font-size:11px;color:#000;transform:scaleX(0.9702)">Anual leave</div>
<div class="t" style="left:243.80px;top:88px;font-size:11px;color:#000;transform:scaleX(1.0182)">03/04/2014</div>
<div class="t" style="left:343.80px;top:88px;font-size:11px;color:#000;transform:scaleX(1.0182)">03/18/2014</div>
<div class="t" style="left:443.25px;top:88px;font-size:11px;color:#000;transform:scaleX(1.0450)">15</div>
<div class="t" style="left:542.46px;top:88px;font-size:11px;color:#000;transform:scaleX(1.1385)">bhj</div>
<svg style="position:absolute;left:684px;top:101px" width="13" height="13" viewBox="0 0 13 13">
<rect x="0" y="0" width="13" height="13" fill="#fff"/>
<rect x="0" y="0" width="12" height="1" fill="#a0a0a0"/><rect x="0" y="0" width="1" height="12" fill="#a0a0a0"/>
<rect x="1" y="1" width="10" height="1" fill="#696969"/><rect x="1" y="1" width="1" height="10" fill="#696969"/>
<rect x="1" y="11" width="11" height="1" fill="#e3e3e3"/><rect x="11" y="1" width="1" height="11" fill="#e3e3e3"/>
<g transform="translate(3,3)"><path d="M0 2h1v3h-1zM1 3h1v3h-1zM2 4h1v3h-1zM3 3h1v3h-1zM4 2h1v3h-1zM5 1h1v3h-1zM6 0h1v3h-1z" fill="#000"/></g>
</svg>
<svg style="position:absolute;left:784px;top:101px" width="13" height="13" viewBox="0 0 13 13">
<rect x="0" y="0" width="13" height="13" fill="#fff"/>
<rect x="0" y="0" width="12" height="1" fill="#a0a0a0"/><rect x="0" y="0" width="1" height="12" fill="#a0a0a0"/>
<rect x="1" y="1" width="10" height="1" fill="#696969"/><rect x="1" y="1" width="1" height="10" fill="#696969"/>
<rect x="1" y="11" width="11" height="1" fill="#e3e3e3"/><rect x="11" y="1" width="1" height="11" fill="#e3e3e3"/>
<g transform="translate(3,3)"><path d="M0 2h1v3h-1zM1 3h1v3h-1zM2 4h1v3h-1zM3 3h1v3h-1zM4 2h1v3h-1zM5 1h1v3h-1zM6 0h1v3h-1z" fill="#000"/></g>
</svg>
<svg style="position:absolute;left:884px;top:101px" width="13" height="13" viewBox="0 0 13 13">
<rect x="0" y="0" width="13" height="13" fill="#fff"/>
<rect x="0" y="0" width="12" height="1" fill="#a0a0a0"/><rect x="0" y="0" width="1" height="12" fill="#a0a0a0"/>
<rect x="1" y="1" width="10" height="1" fill="#696969"/><rect x="1" y="1" width="1" height="10" fill="#696969"/>
<rect x="1" y="11" width="11" height="1" fill="#e3e3e3"/><rect x="11" y="1" width="1" height="11" fill="#e3e3e3"/>
<g transform="translate(3,3)"><path d="M0 2h1v3h-1zM1 3h1v3h-1zM2 4h1v3h-1zM3 3h1v3h-1zM4 2h1v3h-1zM5 1h1v3h-1zM6 0h1v3h-1z" fill="#000"/></g>
</svg>
<div style="position:absolute;left:41px;top:140px;width:900px;height:1px;background:#a0a0a0"></div>
<div style="position:absolute;left:3px;top:140px;width:36px;height:1px;background:#a0a0a0"></div>
<div style="position:absolute;left:40px;top:119px;width:1px;height:22px;background:#a0a0a0"></div>
<div style="position:absolute;left:140px;top:119px;width:1px;height:22px;background:#a0a0a0"></div>
<div style="position:absolute;left:240px;top:119px;width:1px;height:22px;background:#a0a0a0"></div>
<div style="position:absolute;left:340px;top:119px;width:1px;height:22px;background:#a0a0a0"></div>
<div style="position:absolute;left:440px;top:119px;width:1px;height:22px;background:#a0a0a0"></div>
<div style="position:absolute;left:540px;top:119px;width:1px;height:22px;background:#a0a0a0"></div>
<div style="position:absolute;left:640px;top:119px;width:1px;height:22px;background:#a0a0a0"></div>
<div style="position:absolute;left:740px;top:119px;width:1px;height:22px;background:#a0a0a0"></div>
<div style="position:absolute;left:840px;top:119px;width:1px;height:22px;background:#a0a0a0"></div>
<div class="t" style="left:42.78px;top:110px;font-size:11px;color:#000;transform:scaleX(0.9167)">Denil Smile</div>
<div class="t" style="left:142.52px;top:110px;font-size:11px;color:#000;transform:scaleX(0.9788)">Maternal Leaves</div>
<div class="t" style="left:243.80px;top:110px;font-size:11px;color:#000;transform:scaleX(1.0182)">04/08/2014</div>
<div class="t" style="left:343.80px;top:110px;font-size:11px;color:#000;transform:scaleX(1.0182)">04/22/2014</div>
<div class="t" style="left:443.25px;top:110px;font-size:11px;color:#000;transform:scaleX(1.0450)">15</div>
<div class="t" style="left:542.70px;top:110px;font-size:11px;color:#000;transform:scaleX(0.9000)">Nill</div>
<svg style="position:absolute;left:684px;top:123px" width="13" height="13" viewBox="0 0 13 13">
<rect x="0" y="0" width="13" height="13" fill="#fff"/>
<rect x="0" y="0" width="12" height="1" fill="#a0a0a0"/><rect x="0" y="0" width="1" height="12" fill="#a0a0a0"/>
<rect x="1" y="1" width="10" height="1" fill="#696969"/><rect x="1" y="1" width="1" height="10" fill="#696969"/>
<rect x="1" y="11" width="11" height="1" fill="#e3e3e3"/><rect x="11" y="1" width="1" height="11" fill="#e3e3e3"/>

</svg>
<svg style="position:absolute;left:784px;top:123px" width="13" height="13" viewBox="0 0 13 13">
<rect x="0" y="0" width="13" height="13" fill="#fff"/>
<rect x="0" y="0" width="12" height="1" fill="#a0a0a0"/><rect x="0" y="0" width="1" height="12" fill="#a0a0a0"/>
<rect x="1" y="1" width="10" height="1" fill="#696969"/><rect x="1" y="1" width="1" height="10" fill="#696969"/>
<rect x="1" y="11" width="11" height="1" fill="#e3e3e3"/><rect x="11" y="1" width="1" height="11" fill="#e3e3e3"/>
<g transform="translate(3,3)"><path d="M0 2h1v3h-1zM1 3h1v3h-1zM2 4h1v3h-1zM3 3h1v3h-1zM4 2h1v3h-1zM5 1h1v3h-1zM6 0h1v3h-1z" fill="#000"/></g>
</svg>
<svg style="position:absolute;left:884px;top:123px" width="13" height="13" viewBox="0 0 13 13">
<rect x="0" y="0" width="13" height="13" fill="#fff"/>
<rect x="0" y="0" width="12" height="1" fill="#a0a0a0"/><rect x="0" y="0" width="1" height="12" fill="#a0a0a0"/>
<rect x="1" y="1" width="10" height="1" fill="#696969"/><rect x="1" y="1" width="1" height="10" fill="#696969"/>
<rect x="1" y="11" width="11" height="1" fill="#e3e3e3"/><rect x="11" y="1" width="1" height="11" fill="#e3e3e3"/>

</svg>
<div style="position:absolute;left:41px;top:162px;width:900px;height:1px;background:#a0a0a0"></div>
<div style="position:absolute;left:3px;top:162px;width:36px;height:1px;background:#a0a0a0"></div>
<div style="position:absolute;left:40px;top:141px;width:1px;height:22px;background:#a0a0a0"></div>
<div style="position:absolute;left:140px;top:141px;width:1px;height:22px;background:#a0a0a0"></div>
<div style="position:absolute;left:240px;top:141px;width:1px;height:22px;background:#a0a0a0"></div>
<div style="position:absolute;left:340px;top:141px;width:1px;height:22px;background:#a0a0a0"></div>
<div style="position:absolute;left:440px;top:141px;width:1px;height:22px;background:#a0a0a0"></div>
<div style="position:absolute;left:540px;top:141px;width:1px;height:22px;background:#a0a0a0"></div>
<div style="position:absolute;left:640px;top:141px;width:1px;height:22px;background:#a0a0a0"></div>
<div style="position:absolute;left:740px;top:141px;width:1px;height:22px;background:#a0a0a0"></div>
<div style="position:absolute;left:840px;top:141px;width:1px;height:22px;background:#a0a0a0"></div>
<div class="t" style="left:42.72px;top:132px;font-size:11px;color:#000;transform:scaleX(0.9750)">Bency Solomon ...</div>
<div class="t" style="left:142.52px;top:132px;font-size:11px;color:#000;transform:scaleX(0.9788)">Maternal Leaves</div>
<div class="t" style="left:243.80px;top:132px;font-size:11px;color:#000;transform:scaleX(1.0182)">04/01/2014</div>
<div class="t" style="left:343.80px;top:132px;font-size:11px;color:#000;transform:scaleX(1.0182)">04/08/2014</div>
<div class="t" style="left:444.30px;top:132px;font-size:11px;color:#000;transform:scaleX(1.0450)">8</div>
<div class="t" style="left:542.62px;top:132px;font-size:11px;color:#000;transform:scaleX(0.9750)">nill</div>
<svg style="position:absolute;left:684px;top:145px" width="13" height="13" viewBox="0 0 13 13">
<rect x="0" y="0" width="13" height="13" fill="#fff"/>
<rect x="0" y="0" width="12" height="1" fill="#a0a0a0"/><rect x="0" y="0" width="1" height="12" fill="#a0a0a0"/>
<rect x="1" y="1" width="10" height="1" fill="#696969"/><rect x="1" y="1" width="1" height="10" fill="#696969"/>
<rect x="1" y="11" width="11" height="1" fill="#e3e3e3"/><rect x="11" y="1" width="1" height="11" fill="#e3e3e3"/>

</svg>
<svg style="position:absolute;left:784px;top:145px" width="13" height="13" viewBox="0 0 13 13">
<rect x="0" y="0" width="13" height="13" fill="#fff"/>
<rect x="0" y="0" width="12" height="1" fill="#a0a0a0"/><rect x="0" y="0" width="1" height="12" fill="#a0a0a0"/>
<rect x="1" y="1" width="10" height="1" fill="#696969"/><rect x="1" y="1" width="1" height="10" fill="#696969"/>
<rect x="1" y="11" width="11" height="1" fill="#e3e3e3"/><rect x="11" y="1" width="1" height="11" fill="#e3e3e3"/>
<g transform="translate(3,3)"><path d="M0 2h1v3h-1zM1 3h1v3h-1zM2 4h1v3h-1zM3 3h1v3h-1zM4 2h1v3h-1zM5 1h1v3h-1zM6 0h1v3h-1z" fill="#000"/></g>
</svg>
<svg style="position:absolute;left:884px;top:145px" width="13" height="13" viewBox="0 0 13 13">
<rect x="0" y="0" width="13" height="13" fill="#fff"/>
<rect x="0" y="0" width="12" height="1" fill="#a0a0a0"/><rect x="0" y="0" width="1" height="12" fill="#a0a0a0"/>
<rect x="1" y="1" width="10" height="1" fill="#696969"/><rect x="1" y="1" width="1" height="10" fill="#696969"/>
<rect x="1" y="11" width="11" height="1" fill="#e3e3e3"/><rect x="11" y="1" width="1" height="11" fill="#e3e3e3"/>
<g transform="translate(3,3)"><path d="M0 2h1v3h-1zM1 3h1v3h-1zM2 4h1v3h-1zM3 3h1v3h-1zM4 2h1v3h-1zM5 1h1v3h-1zM6 0h1v3h-1z" fill="#000"/></g>
</svg>
<div style="position:absolute;left:41px;top:184px;width:900px;height:1px;background:#a0a0a0"></div>
<div style="position:absolute;left:3px;top:184px;width:36px;height:1px;background:#a0a0a0"></div>
<div style="position:absolute;left:40px;top:163px;width:1px;height:22px;background:#a0a0a0"></div>
<div style="position:absolute;left:140px;top:163px;width:1px;height:22px;background:#a0a0a0"></div>
<div style="position:absolute;left:240px;top:163px;width:1px;height:22px;background:#a0a0a0"></div>
<div style="position:absolute;left:340px;top:163px;width:1px;height:22px;background:#a0a0a0"></div>
<div style="position:absolute;left:440px;top:163px;width:1px;height:22px;background:#a0a0a0"></div>
<div style="position:absolute;left:540px;top:163px;width:1px;height:22px;background:#a0a0a0"></div>
<div style="position:absolute;left:640px;top:163px;width:1px;height:22px;background:#a0a0a0"></div>
<div style="position:absolute;left:740px;top:163px;width:1px;height:22px;background:#a0a0a0"></div>
<div style="position:absolute;left:840px;top:163px;width:1px;height:22px;background:#a0a0a0"></div>
<div class="t" style="left:42.78px;top:154px;font-size:11px;color:#000;transform:scaleX(0.9167)">Denil Smile</div>
<div class="t" style="left:142.52px;top:154px;font-size:11px;color:#000;transform:scaleX(0.9788)">Maternal Leaves</div>
<div class="t" style="left:243.80px;top:154px;font-size:11px;color:#000;transform:scaleX(1.0182)">05/01/2014</div>
<div class="t" style="left:343.80px;top:154px;font-size:11px;color:#000;transform:scaleX(1.0182)">05/15/2014</div>
<div class="t" style="left:443.25px;top:154px;font-size:11px;color:#000;transform:scaleX(1.0450)">15</div>
<div class="t" style="left:542.62px;top:154px;font-size:11px;color:#000;transform:scaleX(0.9750)">nill</div>
<svg style="position:absolute;left:684px;top:167px" width="13" height="13" viewBox="0 0 13 13">
<rect x="0" y="0" width="13" height="13" fill="#fff"/>
<rect x="0" y="0" width="12" height="1" fill="#a0a0a0"/><rect x="0" y="0" width="1" height="12" fill="#a0a0a0"/>
<rect x="1" y="1" width="10" height="1" fill="#696969"/><rect x="1" y="1" width="1" height="10" fill="#696969"/>
<rect x="1" y="11" width="11" height="1" fill="#e3e3e3"/><rect x="11" y="1" width="1" height="11" fill="#e3e3e3"/>

</svg>
<svg style="position:absolute;left:784px;top:167px" width="13" height="13" viewBox="0 0 13 13">
<rect x="0" y="0" width="13" height="13" fill="#fff"/>
<rect x="0" y="0" width="12" height="1" fill="#a0a0a0"/><rect x="0" y="0" width="1" height="12" fill="#a0a0a0"/>
<rect x="1" y="1" width="10" height="1" fill="#696969"/><rect x="1" y="1" width="1" height="10" fill="#696969"/>
<rect x="1" y="11" width="11" height="1" fill="#e3e3e3"/><rect x="11" y="1" width="1" height="11" fill="#e3e3e3"/>
<g transform="translate(3,3)"><path d="M0 2h1v3h-1zM1 3h1v3h-1zM2 4h1v3h-1zM3 3h1v3h-1zM4 2h1v3h-1zM5 1h1v3h-1zM6 0h1v3h-1z" fill="#000"/></g>
</svg>
<svg style="position:absolute;left:884px;top:167px" width="13" height="13" viewBox="0 0 13 13">
<rect x="0" y="0" width="13" height="13" fill="#fff"/>
<rect x="0" y="0" width="12" height="1" fill="#a0a0a0"/><rect x="0" y="0" width="1" height="12" fill="#a0a0a0"/>
<rect x="1" y="1" width="10" height="1" fill="#696969"/><rect x="1" y="1" width="1" height="10" fill="#696969"/>
<rect x="1" y="11" width="11" height="1" fill="#e3e3e3"/><rect x="11" y="1" width="1" height="11" fill="#e3e3e3"/>
<g transform="translate(3,3)"><path d="M0 2h1v3h-1zM1 3h1v3h-1zM2 4h1v3h-1zM3 3h1v3h-1zM4 2h1v3h-1zM5 1h1v3h-1zM6 0h1v3h-1z" fill="#000"/></g>
</svg>
<div style="position:absolute;left:41px;top:206px;width:900px;height:1px;background:#a0a0a0"></div>
<div style="position:absolute;left:3px;top:206px;width:36px;height:1px;background:#a0a0a0"></div>
<div style="position:absolute;left:40px;top:185px;width:1px;height:22px;background:#a0a0a0"></div>
<div style="position:absolute;left:140px;top:185px;width:1px;height:22px;background:#a0a0a0"></div>
<div style="position:absolute;left:240px;top:185px;width:1px;height:22px;background:#a0a0a0"></div>
<div style="position:absolute;left:340px;top:185px;width:1px;height:22px;background:#a0a0a0"></div>
<div style="position:absolute;left:440px;top:185px;width:1px;height:22px;background:#a0a0a0"></div>
<div style="position:absolute;left:540px;top:185px;width:1px;height:22px;background:#a0a0a0"></div>
<div style="position:absolute;left:640px;top:185px;width:1px;height:22px;background:#a0a0a0"></div>
<div style="position:absolute;left:740px;top:185px;width:1px;height:22px;background:#a0a0a0"></div>
<div style="position:absolute;left:840px;top:185px;width:1px;height:22px;background:#a0a0a0"></div>
<div class="t" style="left:42.71px;top:176px;font-size:11px;color:#000;transform:scaleX(0.9946)">Cathrine Brown</div>
<div class="t" style="left:142.54px;top:176px;font-size:11px;color:#000;transform:scaleX(0.9613)">Medical Leaves</div>
<div class="t" style="left:243.80px;top:176px;font-size:11px;color:#000;transform:scaleX(1.0182)">05/21/2014</div>
<div class="t" style="left:343.80px;top:176px;font-size:11px;color:#000;transform:scaleX(1.0182)">05/22/2014</div>
<div class="t" style="left:444.30px;top:176px;font-size:11px;color:#000;transform:scaleX(1.0450)">2</div>
<svg style="position:absolute;left:684px;top:189px" width="13" height="13" viewBox="0 0 13 13">
<rect x="0" y="0" width="13" height="13" fill="#fff"/>
<rect x="0" y="0" width="12" height="1" fill="#a0a0a0"/><rect x="0" y="0" width="1" height="12" fill="#a0a0a0"/>
<rect x="1" y="1" width="10" height="1" fill="#696969"/><rect x="1" y="1" width="1" height="10" fill="#696969"/>
<rect x="1" y="11" width="11" height="1" fill="#e3e3e3"/><rect x="11" y="1" width="1" height="11" fill="#e3e3e3"/>

</svg>
<svg style="position:absolute;left:784px;top:189px" width="13" height="13" viewBox="0 0 13 13">
<rect x="0" y="0" width="13" height="13" fill="#fff"/>
<rect x="0" y="0" width="12" height="1" fill="#a0a0a0"/><rect x="0" y="0" width="1" height="12" fill="#a0a0a0"/>
<rect x="1" y="1" width="10" height="1" fill="#696969"/><rect x="1" y="1" width="1" height="10" fill="#696969"/>
<rect x="1" y="11" width="11" height="1" fill="#e3e3e3"/><rect x="11" y="1" width="1" height="11" fill="#e3e3e3"/>

</svg>
<svg style="position:absolute;left:884px;top:189px" width="13" height="13" viewBox="0 0 13 13">
<rect x="0" y="0" width="13" height="13" fill="#fff"/>
<rect x="0" y="0" width="12" height="1" fill="#a0a0a0"/><rect x="0" y="0" width="1" height="12" fill="#a0a0a0"/>
<rect x="1" y="1" width="10" height="1" fill="#696969"/><rect x="1" y="1" width="1" height="10" fill="#696969"/>
<rect x="1" y="11" width="11" height="1" fill="#e3e3e3"/><rect x="11" y="1" width="1" height="11" fill="#e3e3e3"/>

</svg>
<div style="position:absolute;left:41px;top:228px;width:900px;height:1px;background:#a0a0a0"></div>
<div style="position:absolute;left:3px;top:228px;width:36px;height:1px;background:#a0a0a0"></div>
<div style="position:absolute;left:40px;top:207px;width:1px;height:22px;background:#a0a0a0"></div>
<div style="position:absolute;left:140px;top:207px;width:1px;height:22px;background:#a0a0a0"></div>
<div style="position:absolute;left:240px;top:207px;width:1px;height:22px;background:#a0a0a0"></div>
<div style="position:absolute;left:340px;top:207px;width:1px;height:22px;background:#a0a0a0"></div>
<div style="position:absolute;left:440px;top:207px;width:1px;height:22px;background:#a0a0a0"></div>
<div style="position:absolute;left:540px;top:207px;width:1px;height:22px;background:#a0a0a0"></div>
<div style="position:absolute;left:640px;top:207px;width:1px;height:22px;background:#a0a0a0"></div>
<div style="position:absolute;left:740px;top:207px;width:1px;height:22px;background:#a0a0a0"></div>
<div style="position:absolute;left:840px;top:207px;width:1px;height:22px;background:#a0a0a0"></div>
<div class="t" style="left:42.71px;top:198px;font-size:11px;color:#000;transform:scaleX(0.9946)">Cathrine Brown</div>
<div class="t" style="left:142.52px;top:198px;font-size:11px;color:#000;transform:scaleX(0.9788)">Maternal Leaves</div>
<div class="t" style="left:243.80px;top:198px;font-size:11px;color:#000;transform:scaleX(1.0182)">05/08/2014</div>
<div class="t" style="left:343.80px;top:198px;font-size:11px;color:#000;transform:scaleX(1.0182)">05/22/2014</div>
<div class="t" style="left:443.25px;top:198px;font-size:11px;color:#000;transform:scaleX(1.0450)">15</div>
<div class="t" style="left:542.62px;top:198px;font-size:11px;color:#000;transform:scaleX(0.9750)">nilkl</div>
<svg style="position:absolute;left:684px;top:211px" width="13" height="13" viewBox="0 0 13 13">
<rect x="0" y="0" width="13" height="13" fill="#fff"/>
<rect x="0" y="0" width="12" height="1" fill="#a0a0a0"/><rect x="0" y="0" width="1" height="12" fill="#a0a0a0"/>
<rect x="1" y="1" width="10" height="1" fill="#696969"/><rect x="1" y="1" width="1" height="10" fill="#696969"/>
<rect x="1" y="11" width="11" height="1" fill="#e3e3e3"/><rect x="11" y="1" width="1" height="11" fill="#e3e3e3"/>

</svg>
<svg style="position:absolute;left:784px;top:211px" width="13" height="13" viewBox="0 0 13 13">
<rect x="0" y="0" width="13" height="13" fill="#fff"/>
<rect x="0" y="0" width="12" height="1" fill="#a0a0a0"/><rect x="0" y="0" width="1" height="12" fill="#a0a0a0"/>
<rect x="1" y="1" width="10" height="1" fill="#696969"/><rect x="1" y="1" width="1" height="10" fill="#696969"/>
<rect x="1" y="11" width="11" height="1" fill="#e3e3e3"/><rect x="11" y="1" width="1" height="11" fill="#e3e3e3"/>
<g transform="translate(3,3)"><path d="M0 2h1v3h-1zM1 3h1v3h-1zM2 4h1v3h-1zM3 3h1v3h-1zM4 2h1v3h-1zM5 1h1v3h-1zM6 0h1v3h-1z" fill="#000"/></g>
</svg>
<svg style="position:absolute;left:884px;top:211px" width="13" height="13" viewBox="0 0 13 13">
<rect x="0" y="0" width="13" height="13" fill="#fff"/>
<rect x="0" y="0" width="12" height="1" fill="#a0a0a0"/><rect x="0" y="0" width="1" height="12" fill="#a0a0a0"/>
<rect x="1" y="1" width="10" height="1" fill="#696969"/><rect x="1" y="1" width="1" height="10" fill="#696969"/>
<rect x="1" y="11" width="11" height="1" fill="#e3e3e3"/><rect x="11" y="1" width="1" height="11" fill="#e3e3e3"/>
<g transform="translate(3,3)"><path d="M0 2h1v3h-1zM1 3h1v3h-1zM2 4h1v3h-1zM3 3h1v3h-1zM4 2h1v3h-1zM5 1h1v3h-1zM6 0h1v3h-1z" fill="#000"/></g>
</svg>
<div style="position:absolute;left:41px;top:250px;width:900px;height:1px;background:#a0a0a0"></div>
<div style="position:absolute;left:3px;top:250px;width:36px;height:1px;background:#a0a0a0"></div>
<div style="position:absolute;left:40px;top:229px;width:1px;height:22px;background:#a0a0a0"></div>
<div style="position:absolute;left:140px;top:229px;width:1px;height:22px;background:#a0a0a0"></div>
<div style="position:absolute;left:240px;top:229px;width:1px;height:22px;background:#a0a0a0"></div>
<div style="position:absolute;left:340px;top:229px;width:1px;height:22px;background:#a0a0a0"></div>
<div style="position:absolute;left:440px;top:229px;width:1px;height:22px;background:#a0a0a0"></div>
<div style="position:absolute;left:540px;top:229px;width:1px;height:22px;background:#a0a0a0"></div>
<div style="position:absolute;left:640px;top:229px;width:1px;height:22px;background:#a0a0a0"></div>
<div style="position:absolute;left:740px;top:229px;width:1px;height:22px;background:#a0a0a0"></div>
<div style="position:absolute;left:840px;top:229px;width:1px;height:22px;background:#a0a0a0"></div>
<div class="t" style="left:42.78px;top:220px;font-size:11px;color:#000;transform:scaleX(0.9167)">Denil Smile</div>
<div class="t" style="left:142.52px;top:220px;font-size:11px;color:#000;transform:scaleX(0.9788)">Maternal Leaves</div>
<div class="t" style="left:243.80px;top:220px;font-size:11px;color:#000;transform:scaleX(1.0182)">05/01/2014</div>
<div class="t" style="left:343.80px;top:220px;font-size:11px;color:#000;transform:scaleX(1.0182)">05/08/2014</div>
<div class="t" style="left:444.30px;top:220px;font-size:11px;color:#000;transform:scaleX(1.0450)">8</div>
<div class="t" style="left:542.62px;top:220px;font-size:11px;color:#000;transform:scaleX(0.9750)">nill</div>
<svg style="position:absolute;left:684px;top:233px" width="13" height="13" viewBox="0 0 13 13">
<rect x="0" y="0" width="13" height="13" fill="#fff"/>
<rect x="0" y="0" width="12" height="1" fill="#a0a0a0"/><rect x="0" y="0" width="1" height="12" fill="#a0a0a0"/>
<rect x="1" y="1" width="10" height="1" fill="#696969"/><rect x="1" y="1" width="1" height="10" fill="#696969"/>
<rect x="1" y="11" width="11" height="1" fill="#e3e3e3"/><rect x="11" y="1" width="1" height="11" fill="#e3e3e3"/>

</svg>
<svg style="position:absolute;left:784px;top:233px" width="13" height="13" viewBox="0 0 13 13">
<rect x="0" y="0" width="13" height="13" fill="#fff"/>
<rect x="0" y="0" width="12" height="1" fill="#a0a0a0"/><rect x="0" y="0" width="1" height="12" fill="#a0a0a0"/>
<rect x="1" y="1" width="10" height="1" fill="#696969"/><rect x="1" y="1" width="1" height="10" fill="#696969"/>
<rect x="1" y="11" width="11" height="1" fill="#e3e3e3"/><rect x="11" y="1" width="1" height="11" fill="#e3e3e3"/>
<g transform="translate(3,3)"><path d="M0 2h1v3h-1zM1 3h1v3h-1zM2 4h1v3h-1zM3 3h1v3h-1zM4 2h1v3h-1zM5 1h1v3h-1zM6 0h1v3h-1z" fill="#000"/></g>
</svg>
<svg style="position:absolute;left:884px;top:233px" width="13" height="13" viewBox="0 0 13 13">
<rect x="0" y="0" width="13" height="13" fill="#fff"/>
<rect x="0" y="0" width="12" height="1" fill="#a0a0a0"/><rect x="0" y="0" width="1" height="12" fill="#a0a0a0"/>
<rect x="1" y="1" width="10" height="1" fill="#696969"/><rect x="1" y="1" width="1" height="10" fill="#696969"/>
<rect x="1" y="11" width="11" height="1" fill="#e3e3e3"/><rect x="11" y="1" width="1" height="11" fill="#e3e3e3"/>
<g transform="translate(3,3)"><path d="M0 2h1v3h-1zM1 3h1v3h-1zM2 4h1v3h-1zM3 3h1v3h-1zM4 2h1v3h-1zM5 1h1v3h-1zM6 0h1v3h-1z" fill="#000"/></g>
</svg>
<div style="position:absolute;left:41px;top:272px;width:900px;height:1px;background:#a0a0a0"></div>
<div style="position:absolute;left:3px;top:272px;width:36px;height:1px;background:#a0a0a0"></div>
<div style="position:absolute;left:40px;top:251px;width:1px;height:22px;background:#a0a0a0"></div>
<div style="position:absolute;left:140px;top:251px;width:1px;height:22px;background:#a0a0a0"></div>
<div style="position:absolute;left:240px;top:251px;width:1px;height:22px;background:#a0a0a0"></div>
<div style="position:absolute;left:340px;top:251px;width:1px;height:22px;background:#a0a0a0"></div>
<div style="position:absolute;left:440px;top:251px;width:1px;height:22px;background:#a0a0a0"></div>
<div style="position:absolute;left:540px;top:251px;width:1px;height:22px;background:#a0a0a0"></div>
<div style="position:absolute;left:640px;top:251px;width:1px;height:22px;background:#a0a0a0"></div>
<div style="position:absolute;left:740px;top:251px;width:1px;height:22px;background:#a0a0a0"></div>
<div style="position:absolute;left:840px;top:251px;width:1px;height:22px;background:#a0a0a0"></div>
<div class="t" style="left:42.72px;top:242px;font-size:11px;color:#000;transform:scaleX(0.9750)">Bency Solomon ...</div>
<div class="t" style="left:142.52px;top:242px;font-size:11px;color:#000;transform:scaleX(0.9788)">Maternal Leaves</div>
<div class="t" style="left:243.80px;top:242px;font-size:11px;color:#000;transform:scaleX(1.0182)">05/01/2014</div>
<div class="t" style="left:343.80px;top:242px;font-size:11px;color:#000;transform:scaleX(1.0182)">05/08/2014</div>
<div class="t" style="left:444.30px;top:242px;font-size:11px;color:#000;transform:scaleX(1.0450)">8</div>
<div class="t" style="left:542.66px;top:242px;font-size:11px;color:#000;transform:scaleX(0.9389)">sick</div>
<svg style="position:absolute;left:684px;top:255px" width="13" height="13" viewBox="0 0 13 13">
<rect x="0" y="0" width="13" height="13" fill="#fff"/>
<rect x="0" y="0" width="12" height="1" fill="#a0a0a0"/><rect x="0" y="0" width="1" height="12" fill="#a0a0a0"/>
<rect x="1" y="1" width="10" height="1" fill="#696969"/><rect x="1" y="1" width="1" height="10" fill="#696969"/>
<rect x="1" y="11" width="11" height="1" fill="#e3e3e3"/><rect x="11" y="1" width="1" height="11" fill="#e3e3e3"/>

</svg>
<svg style="position:absolute;left:784px;top:255px" width="13" height="13" viewBox="0 0 13 13">
<rect x="0" y="0" width="13" height="13" fill="#fff"/>
<rect x="0" y="0" width="12" height="1" fill="#a0a0a0"/><rect x="0" y="0" width="1" height="12" fill="#a0a0a0"/>
<rect x="1" y="1" width="10" height="1" fill="#696969"/><rect x="1" y="1" width="1" height="10" fill="#696969"/>
<rect x="1" y="11" width="11" height="1" fill="#e3e3e3"/><rect x="11" y="1" width="1" height="11" fill="#e3e3e3"/>
<g transform="translate(3,3)"><path d="M0 2h1v3h-1zM1 3h1v3h-1zM2 4h1v3h-1zM3 3h1v3h-1zM4 2h1v3h-1zM5 1h1v3h-1zM6 0h1v3h-1z" fill="#000"/></g>
</svg>
<svg style="position:absolute;left:884px;top:255px" width="13" height="13" viewBox="0 0 13 13">
<rect x="0" y="0" width="13" height="13" fill="#fff"/>
<rect x="0" y="0" width="12" height="1" fill="#a0a0a0"/><rect x="0" y="0" width="1" height="12" fill="#a0a0a0"/>
<rect x="1" y="1" width="10" height="1" fill="#696969"/><rect x="1" y="1" width="1" height="10" fill="#696969"/>
<rect x="1" y="11" width="11" height="1" fill="#e3e3e3"/><rect x="11" y="1" width="1" height="11" fill="#e3e3e3"/>
<g transform="translate(3,3)"><path d="M0 2h1v3h-1zM1 3h1v3h-1zM2 4h1v3h-1zM3 3h1v3h-1zM4 2h1v3h-1zM5 1h1v3h-1zM6 0h1v3h-1z" fill="#000"/></g>
</svg>
<div style="position:absolute;left:41px;top:294px;width:900px;height:1px;background:#a0a0a0"></div>
<div style="position:absolute;left:3px;top:294px;width:36px;height:1px;background:#a0a0a0"></div>
<div style="position:absolute;left:40px;top:273px;width:1px;height:22px;background:#a0a0a0"></div>
<div style="position:absolute;left:140px;top:273px;width:1px;height:22px;background:#a0a0a0"></div>
<div style="position:absolute;left:240px;top:273px;width:1px;height:22px;background:#a0a0a0"></div>
<div style="position:absolute;left:340px;top:273px;width:1px;height:22px;background:#a0a0a0"></div>
<div style="position:absolute;left:440px;top:273px;width:1px;height:22px;background:#a0a0a0"></div>
<div style="position:absolute;left:540px;top:273px;width:1px;height:22px;background:#a0a0a0"></div>
<div style="position:absolute;left:640px;top:273px;width:1px;height:22px;background:#a0a0a0"></div>
<div style="position:absolute;left:740px;top:273px;width:1px;height:22px;background:#a0a0a0"></div>
<div style="position:absolute;left:840px;top:273px;width:1px;height:22px;background:#a0a0a0"></div>
<div class="t" style="left:42.78px;top:264px;font-size:11px;color:#000;transform:scaleX(0.9167)">Denil Smile</div>
<div class="t" style="left:142.52px;top:264px;font-size:11px;color:#000;transform:scaleX(0.9788)">Maternal Leaves</div>
<div class="t" style="left:243.80px;top:264px;font-size:11px;color:#000;transform:scaleX(1.0182)">05/01/2014</div>
<div class="t" style="left:343.80px;top:264px;font-size:11px;color:#000;transform:scaleX(1.0182)">05/03/2014</div>
<div class="t" style="left:443.25px;top:264px;font-size:11px;color:#000;transform:scaleX(1.0450)">3</div>
<div class="t" style="left:542.62px;top:264px;font-size:11px;color:#000;transform:scaleX(0.9750)">nathing</div>
<svg style="position:absolute;left:684px;top:277px" width="13" height="13" viewBox="0 0 13 13">
<rect x="0" y="0" width="13" height="13" fill="#fff"/>
<rect x="0" y="0" width="12" height="1" fill="#a0a0a0"/><rect x="0" y="0" width="1" height="12" fill="#a0a0a0"/>
<rect x="1" y="1" width="10" height="1" fill="#696969"/><rect x="1" y="1" width="1" height="10" fill="#696969"/>
<rect x="1" y="11" width="11" height="1" fill="#e3e3e3"/><rect x="11" y="1" width="1" height="11" fill="#e3e3e3"/>
<g transform="translate(3,3)"><path d="M0 2h1v3h-1zM1 3h1v3h-1zM2 4h1v3h-1zM3 3h1v3h-1zM4 2h1v3h-1zM5 1h1v3h-1zM6 0h1v3h-1z" fill="#000"/></g>
</svg>
<svg style="position:absolute;left:784px;top:277px" width="13" height="13" viewBox="0 0 13 13">
<rect x="0" y="0" width="13" height="13" fill="#fff"/>
<rect x="0" y="0" width="12" height="1" fill="#a0a0a0"/><rect x="0" y="0" width="1" height="12" fill="#a0a0a0"/>
<rect x="1" y="1" width="10" height="1" fill="#696969"/><rect x="1" y="1" width="1" height="10" fill="#696969"/>
<rect x="1" y="11" width="11" height="1" fill="#e3e3e3"/><rect x="11" y="1" width="1" height="11" fill="#e3e3e3"/>
<g transform="translate(3,3)"><path d="M0 2h1v3h-1zM1 3h1v3h-1zM2 4h1v3h-1zM3 3h1v3h-1zM4 2h1v3h-1zM5 1h1v3h-1zM6 0h1v3h-1z" fill="#000"/></g>
</svg>
<svg style="position:absolute;left:884px;top:277px" width="13" height="13" viewBox="0 0 13 13">
<rect x="0" y="0" width="13" height="13" fill="#fff"/>
<rect x="0" y="0" width="12" height="1" fill="#a0a0a0"/><rect x="0" y="0" width="1" height="12" fill="#a0a0a0"/>
<rect x="1" y="1" width="10" height="1" fill="#696969"/><rect x="1" y="1" width="1" height="10" fill="#696969"/>
<rect x="1" y="11" width="11" height="1" fill="#e3e3e3"/><rect x="11" y="1" width="1" height="11" fill="#e3e3e3"/>

</svg>
<div style="position:absolute;left:41px;top:316px;width:900px;height:1px;background:#a0a0a0"></div>
<div style="position:absolute;left:3px;top:316px;width:36px;height:1px;background:#a0a0a0"></div>
<div style="position:absolute;left:40px;top:295px;width:1px;height:22px;background:#a0a0a0"></div>
<div style="position:absolute;left:140px;top:295px;width:1px;height:22px;background:#a0a0a0"></div>
<div style="position:absolute;left:240px;top:295px;width:1px;height:22px;background:#a0a0a0"></div>
<div style="position:absolute;left:340px;top:295px;width:1px;height:22px;background:#a0a0a0"></div>
<div style="position:absolute;left:440px;top:295px;width:1px;height:22px;background:#a0a0a0"></div>
<div style="position:absolute;left:540px;top:295px;width:1px;height:22px;background:#a0a0a0"></div>
<div style="position:absolute;left:640px;top:295px;width:1px;height:22px;background:#a0a0a0"></div>
<div style="position:absolute;left:740px;top:295px;width:1px;height:22px;background:#a0a0a0"></div>
<div style="position:absolute;left:840px;top:295px;width:1px;height:22px;background:#a0a0a0"></div>
<div class="t" style="left:42.71px;top:286px;font-size:11px;color:#000;transform:scaleX(0.9946)">Cathrine Brown</div>
<div class="t" style="left:142.52px;top:286px;font-size:11px;color:#000;transform:scaleX(0.9788)">Maternal Leaves</div>
<div class="t" style="left:243.80px;top:286px;font-size:11px;color:#000;transform:scaleX(1.0182)">05/08/2014</div>
<div class="t" style="left:343.80px;top:286px;font-size:11px;color:#000;transform:scaleX(1.0182)">05/15/2014</div>
<div class="t" style="left:444.30px;top:286px;font-size:11px;color:#000;transform:scaleX(1.0450)">8</div>
<div class="t" style="left:542.62px;top:286px;font-size:11px;color:#000;transform:scaleX(0.9750)">not</div>
<svg style="position:absolute;left:684px;top:299px" width="13" height="13" viewBox="0 0 13 13">
<rect x="0" y="0" width="13" height="13" fill="#fff"/>
<rect x="0" y="0" width="12" height="1" fill="#a0a0a0"/><rect x="0" y="0" width="1" height="12" fill="#a0a0a0"/>
<rect x="1" y="1" width="10" height="1" fill="#696969"/><rect x="1" y="1" width="1" height="10" fill="#696969"/>
<rect x="1" y="11" width="11" height="1" fill="#e3e3e3"/><rect x="11" y="1" width="1" height="11" fill="#e3e3e3"/>
<g transform="translate(3,3)"><path d="M0 2h1v3h-1zM1 3h1v3h-1zM2 4h1v3h-1zM3 3h1v3h-1zM4 2h1v3h-1zM5 1h1v3h-1zM6 0h1v3h-1z" fill="#000"/></g>
</svg>
<svg style="position:absolute;left:784px;top:299px" width="13" height="13" viewBox="0 0 13 13">
<rect x="0" y="0" width="13" height="13" fill="#fff"/>
<rect x="0" y="0" width="12" height="1" fill="#a0a0a0"/><rect x="0" y="0" width="1" height="12" fill="#a0a0a0"/>
<rect x="1" y="1" width="10" height="1" fill="#696969"/><rect x="1" y="1" width="1" height="10" fill="#696969"/>
<rect x="1" y="11" width="11" height="1" fill="#e3e3e3"/><rect x="11" y="1" width="1" height="11" fill="#e3e3e3"/>
<g transform="translate(3,3)"><path d="M0 2h1v3h-1zM1 3h1v3h-1zM2 4h1v3h-1zM3 3h1v3h-1zM4 2h1v3h-1zM5 1h1v3h-1zM6 0h1v3h-1z" fill="#000"/></g>
</svg>
<svg style="position:absolute;left:884px;top:299px" width="13" height="13" viewBox="0 0 13 13">
<rect x="0" y="0" width="13" height="13" fill="#fff"/>
<rect x="0" y="0" width="12" height="1" fill="#a0a0a0"/><rect x="0" y="0" width="1" height="12" fill="#a0a0a0"/>
<rect x="1" y="1" width="10" height="1" fill="#696969"/><rect x="1" y="1" width="1" height="10" fill="#696969"/>
<rect x="1" y="11" width="11" height="1" fill="#e3e3e3"/><rect x="11" y="1" width="1" height="11" fill="#e3e3e3"/>

</svg>
<div style="position:absolute;left:41px;top:338px;width:900px;height:1px;background:#a0a0a0"></div>
<div style="position:absolute;left:3px;top:338px;width:36px;height:1px;background:#a0a0a0"></div>
<div style="position:absolute;left:40px;top:317px;width:1px;height:22px;background:#a0a0a0"></div>
<div style="position:absolute;left:140px;top:317px;width:1px;height:22px;background:#a0a0a0"></div>
<div style="position:absolute;left:240px;top:317px;width:1px;height:22px;background:#a0a0a0"></div>
<div style="position:absolute;left:340px;top:317px;width:1px;height:22px;background:#a0a0a0"></div>
<div style="position:absolute;left:440px;top:317px;width:1px;height:22px;background:#a0a0a0"></div>
<div style="position:absolute;left:540px;top:317px;width:1px;height:22px;background:#a0a0a0"></div>
<div style="position:absolute;left:640px;top:317px;width:1px;height:22px;background:#a0a0a0"></div>
<div style="position:absolute;left:740px;top:317px;width:1px;height:22px;background:#a0a0a0"></div>
<div style="position:absolute;left:840px;top:317px;width:1px;height:22px;background:#a0a0a0"></div>
<div class="t" style="left:42.72px;top:308px;font-size:11px;color:#000;transform:scaleX(0.9750)">Bency Solomon ...</div>
<div class="t" style="left:142.52px;top:308px;font-size:11px;color:#000;transform:scaleX(0.9788)">Maternal Leaves</div>
<div class="t" style="left:243.80px;top:308px;font-size:11px;color:#000;transform:scaleX(1.0182)">05/03/2014</div>
<div class="t" style="left:343.80px;top:308px;font-size:11px;color:#000;transform:scaleX(1.0182)">05/08/2014</div>
<div class="t" style="left:443.25px;top:308px;font-size:11px;color:#000;transform:scaleX(1.0450)">6</div>
<div class="t" style="left:542.62px;top:308px;font-size:11px;color:#000;transform:scaleX(0.9750)">nill</div>
<svg style="position:absolute;left:684px;top:321px" width="13" height="13" viewBox="0 0 13 13">
<rect x="0" y="0" width="13" height="13" fill="#fff"/>
<rect x="0" y="0" width="12" height="1" fill="#a0a0a0"/><rect x="0" y="0" width="1" height="12" fill="#a0a0a0"/>
<rect x="1" y="1" width="10" height="1" fill="#696969"/><rect x="1" y="1" width="1" height="10" fill="#696969"/>
<rect x="1" y="11" width="11" height="1" fill="#e3e3e3"/><rect x="11" y="1" width="1" height="11" fill="#e3e3e3"/>
<g transform="translate(3,3)"><path d="M0 2h1v3h-1zM1 3h1v3h-1zM2 4h1v3h-1zM3 3h1v3h-1zM4 2h1v3h-1zM5 1h1v3h-1zM6 0h1v3h-1z" fill="#000"/></g>
</svg>
<svg style="position:absolute;left:784px;top:321px" width="13" height="13" viewBox="0 0 13 13">
<rect x="0" y="0" width="13" height="13" fill="#fff"/>
<rect x="0" y="0" width="12" height="1" fill="#a0a0a0"/><rect x="0" y="0" width="1" height="12" fill="#a0a0a0"/>
<rect x="1" y="1" width="10" height="1" fill="#696969"/><rect x="1" y="1" width="1" height="10" fill="#696969"/>
<rect x="1" y="11" width="11" height="1" fill="#e3e3e3"/><rect x="11" y="1" width="1" height="11" fill="#e3e3e3"/>
<g transform="translate(3,3)"><path d="M0 2h1v3h-1zM1 3h1v3h-1zM2 4h1v3h-1zM3 3h1v3h-1zM4 2h1v3h-1zM5 1h1v3h-1zM6 0h1v3h-1z" fill="#000"/></g>
</svg>
<svg style="position:absolute;left:884px;top:321px" width="13" height="13" viewBox="0 0 13 13">
<rect x="0" y="0" width="13" height="13" fill="#fff"/>
<rect x="0" y="0" width="12" height="1" fill="#a0a0a0"/><rect x="0" y="0" width="1" height="12" fill="#a0a0a0"/>
<rect x="1" y="1" width="10" height="1" fill="#696969"/><rect x="1" y="1" width="1" height="10" fill="#696969"/>
<rect x="1" y="11" width="11" height="1" fill="#e3e3e3"/><rect x="11" y="1" width="1" height="11" fill="#e3e3e3"/>
<g transform="translate(3,3)"><path d="M0 2h1v3h-1zM1 3h1v3h-1zM2 4h1v3h-1zM3 3h1v3h-1zM4 2h1v3h-1zM5 1h1v3h-1zM6 0h1v3h-1z" fill="#000"/></g>
</svg>
<div style="position:absolute;left:41px;top:360px;width:900px;height:1px;background:#a0a0a0"></div>
<div style="position:absolute;left:3px;top:360px;width:36px;height:1px;background:#a0a0a0"></div>
<div style="position:absolute;left:40px;top:339px;width:1px;height:22px;background:#a0a0a0"></div>
<div style="position:absolute;left:140px;top:339px;width:1px;height:22px;background:#a0a0a0"></div>
<div style="position:absolute;left:240px;top:339px;width:1px;height:22px;background:#a0a0a0"></div>
<div style="position:absolute;left:340px;top:339px;width:1px;height:22px;background:#a0a0a0"></div>
<div style="position:absolute;left:440px;top:339px;width:1px;height:22px;background:#a0a0a0"></div>
<div style="position:absolute;left:540px;top:339px;width:1px;height:22px;background:#a0a0a0"></div>
<div style="position:absolute;left:640px;top:339px;width:1px;height:22px;background:#a0a0a0"></div>
<div style="position:absolute;left:740px;top:339px;width:1px;height:22px;background:#a0a0a0"></div>
<div style="position:absolute;left:840px;top:339px;width:1px;height:22px;background:#a0a0a0"></div>
<div class="t" style="left:42.78px;top:330px;font-size:11px;color:#000;transform:scaleX(0.9167)">Denil Smile</div>
<div class="t" style="left:142.52px;top:330px;font-size:11px;color:#000;transform:scaleX(0.9788)">Maternal Leaves</div>
<div class="t" style="left:243.80px;top:330px;font-size:11px;color:#000;transform:scaleX(1.0182)">05/03/2014</div>
<div class="t" style="left:343.80px;top:330px;font-size:11px;color:#000;transform:scaleX(1.0182)">05/15/2014</div>
<div class="t" style="left:443.28px;top:330px;font-size:11px;color:#000;transform:scaleX(1.0182)">13</div>
<div class="t" style="left:542.57px;top:330px;font-size:11px;color:#000;transform:scaleX(1.0257)">nothing</div>
<svg style="position:absolute;left:684px;top:343px" width="13" height="13" viewBox="0 0 13 13">
<rect x="0" y="0" width="13" height="13" fill="#fff"/>
<rect x="0" y="0" width="12" height="1" fill="#a0a0a0"/><rect x="0" y="0" width="1" height="12" fill="#a0a0a0"/>
<rect x="1" y="1" width="10" height="1" fill="#696969"/><rect x="1" y="1" width="1" height="10" fill="#696969"/>
<rect x="1" y="11" width="11" height="1" fill="#e3e3e3"/><rect x="11" y="1" width="1" height="11" fill="#e3e3e3"/>
<g transform="translate(3,3)"><path d="M0 2h1v3h-1zM1 3h1v3h-1zM2 4h1v3h-1zM3 3h1v3h-1zM4 2h1v3h-1zM5 1h1v3h-1zM6 0h1v3h-1z" fill="#000"/></g>
</svg>
<svg style="position:absolute;left:784px;top:343px" width="13" height="13" viewBox="0 0 13 13">
<rect x="0" y="0" width="13" height="13" fill="#fff"/>
<rect x="0" y="0" width="12" height="1" fill="#a0a0a0"/><rect x="0" y="0" width="1" height="12" fill="#a0a0a0"/>
<rect x="1" y="1" width="10" height="1" fill="#696969"/><rect x="1" y="1" width="1" height="10" fill="#696969"/>
<rect x="1" y="11" width="11" height="1" fill="#e3e3e3"/><rect x="11" y="1" width="1" height="11" fill="#e3e3e3"/>
<g transform="translate(3,3)"><path d="M0 2h1v3h-1zM1 3h1v3h-1zM2 4h1v3h-1zM3 3h1v3h-1zM4 2h1v3h-1zM5 1h1v3h-1zM6 0h1v3h-1z" fill="#000"/></g>
</svg>
<svg style="position:absolute;left:884px;top:343px" width="13" height="13" viewBox="0 0 13 13">
<rect x="0" y="0" width="13" height="13" fill="#fff"/>
<rect x="0" y="0" width="12" height="1" fill="#a0a0a0"/><rect x="0" y="0" width="1" height="12" fill="#a0a0a0"/>
<rect x="1" y="1" width="10" height="1" fill="#696969"/><rect x="1" y="1" width="1" height="10" fill="#696969"/>
<rect x="1" y="11" width="11" height="1" fill="#e3e3e3"/><rect x="11" y="1" width="1" height="11" fill="#e3e3e3"/>
<g transform="translate(3,3)"><path d="M0 2h1v3h-1zM1 3h1v3h-1zM2 4h1v3h-1zM3 3h1v3h-1zM4 2h1v3h-1zM5 1h1v3h-1zM6 0h1v3h-1z" fill="#000"/></g>
</svg>
<div style="position:absolute;left:41px;top:382px;width:900px;height:1px;background:#a0a0a0"></div>
<div style="position:absolute;left:3px;top:382px;width:36px;height:1px;background:#a0a0a0"></div>
<div style="position:absolute;left:40px;top:361px;width:1px;height:22px;background:#a0a0a0"></div>
<div style="position:absolute;left:140px;top:361px;width:1px;height:22px;background:#a0a0a0"></div>
<div style="position:absolute;left:240px;top:361px;width:1px;height:22px;background:#a0a0a0"></div>
<div style="position:absolute;left:340px;top:361px;width:1px;height:22px;background:#a0a0a0"></div>
<div style="position:absolute;left:440px;top:361px;width:1px;height:22px;background:#a0a0a0"></div>
<div style="position:absolute;left:540px;top:361px;width:1px;height:22px;background:#a0a0a0"></div>
<div style="position:absolute;left:640px;top:361px;width:1px;height:22px;background:#a0a0a0"></div>
<div style="position:absolute;left:740px;top:361px;width:1px;height:22px;background:#a0a0a0"></div>
<div style="position:absolute;left:840px;top:361px;width:1px;height:22px;background:#a0a0a0"></div>
<div class="t" style="left:42.71px;top:352px;font-size:11px;color:#000;transform:scaleX(0.9946)">Cathrine Brown</div>
<div class="t" style="left:142.52px;top:352px;font-size:11px;color:#000;transform:scaleX(0.9788)">Maternal Leaves</div>
<div class="t" style="left:243.80px;top:352px;font-size:11px;color:#000;transform:scaleX(1.0182)">05/09/2014</div>
<div class="t" style="left:343.80px;top:352px;font-size:11px;color:#000;transform:scaleX(1.0182)">05/20/2014</div>
<div class="t" style="left:443.25px;top:352px;font-size:11px;color:#000;transform:scaleX(1.0450)">12</div>
<div class="t" style="left:543.60px;top:352px;font-size:11px;color:#000;transform:scaleX(1.1143)">cvf</div>
<svg style="position:absolute;left:684px;top:365px" width="13" height="13" viewBox="0 0 13 13">
<rect x="0" y="0" width="13" height="13" fill="#fff"/>
<rect x="0" y="0" width="12" height="1" fill="#a0a0a0"/><rect x="0" y="0" width="1" height="12" fill="#a0a0a0"/>
<rect x="1" y="1" width="10" height="1" fill="#696969"/><rect x="1" y="1" width="1" height="10" fill="#696969"/>
<rect x="1" y="11" width="11" height="1" fill="#e3e3e3"/><rect x="11" y="1" width="1" height="11" fill="#e3e3e3"/>
<g transform="translate(3,3)"><path d="M0 2h1v3h-1zM1 3h1v3h-1zM2 4h1v3h-1zM3 3h1v3h-1zM4 2h1v3h-1zM5 1h1v3h-1zM6 0h1v3h-1z" fill="#000"/></g>
</svg>
<svg style="position:absolute;left:784px;top:365px" width="13" height="13" viewBox="0 0 13 13">
<rect x="0" y="0" width="13" height="13" fill="#fff"/>
<rect x="0" y="0" width="12" height="1" fill="#a0a0a0"/><rect x="0" y="0" width="1" height="12" fill="#a0a0a0"/>
<rect x="1" y="1" width="10" height="1" fill="#696969"/><rect x="1" y="1" width="1" height="10" fill="#696969"/>
<rect x="1" y="11" width="11" height="1" fill="#e3e3e3"/><rect x="11" y="1" width="1" height="11" fill="#e3e3e3"/>
<g transform="translate(3,3)"><path d="M0 2h1v3h-1zM1 3h1v3h-1zM2 4h1v3h-1zM3 3h1v3h-1zM4 2h1v3h-1zM5 1h1v3h-1zM6 0h1v3h-1z" fill="#000"/></g>
</svg>
<svg style="position:absolute;left:884px;top:365px" width="13" height="13" viewBox="0 0 13 13">
<rect x="0" y="0" width="13" height="13" fill="#fff"/>
<rect x="0" y="0" width="12" height="1" fill="#a0a0a0"/><rect x="0" y="0" width="1" height="12" fill="#a0a0a0"/>
<rect x="1" y="1" width="10" height="1" fill="#696969"/><rect x="1" y="1" width="1" height="10" fill="#696969"/>
<rect x="1" y="11" width="11" height="1" fill="#e3e3e3"/><rect x="11" y="1" width="1" height="11" fill="#e3e3e3"/>
<g transform="translate(3,3)"><path d="M0 2h1v3h-1zM1 3h1v3h-1zM2 4h1v3h-1zM3 3h1v3h-1zM4 2h1v3h-1zM5 1h1v3h-1zM6 0h1v3h-1z" fill="#000"/></g>
</svg>
<div style="position:absolute;left:41px;top:404px;width:900px;height:1px;background:#a0a0a0"></div>
<div style="position:absolute;left:3px;top:404px;width:36px;height:1px;background:#a0a0a0"></div>
<div style="position:absolute;left:40px;top:383px;width:1px;height:22px;background:#a0a0a0"></div>
<div style="position:absolute;left:140px;top:383px;width:1px;height:22px;background:#a0a0a0"></div>
<div style="position:absolute;left:240px;top:383px;width:1px;height:22px;background:#a0a0a0"></div>
<div style="position:absolute;left:340px;top:383px;width:1px;height:22px;background:#a0a0a0"></div>
<div style="position:absolute;left:440px;top:383px;width:1px;height:22px;background:#a0a0a0"></div>
<div style="position:absolute;left:540px;top:383px;width:1px;height:22px;background:#a0a0a0"></div>
<div style="position:absolute;left:640px;top:383px;width:1px;height:22px;background:#a0a0a0"></div>
<div style="position:absolute;left:740px;top:383px;width:1px;height:22px;background:#a0a0a0"></div>
<div style="position:absolute;left:840px;top:383px;width:1px;height:22px;background:#a0a0a0"></div>
<div class="t" style="left:42.78px;top:374px;font-size:11px;color:#000;transform:scaleX(0.9167)">Denil Smile</div>
<div class="t" style="left:142.51px;top:374px;font-size:11px;color:#000;transform:scaleX(0.9941)">Hajj Leave</div>
<div class="t" style="left:243.80px;top:374px;font-size:11px;color:#000;transform:scaleX(1.0182)">05/01/2014</div>
<div class="t" style="left:343.80px;top:374px;font-size:11px;color:#000;transform:scaleX(1.0182)">05/20/2014</div>
<div class="t" style="left:444.30px;top:374px;font-size:11px;color:#000;transform:scaleX(0.9167)">20</div>
<div class="t" style="left:542.60px;top:374px;font-size:11px;color:#000;transform:scaleX(1.0000)">personal</div>
<svg style="position:absolute;left:684px;top:387px" width="13" height="13" viewBox="0 0 13 13">
<rect x="0" y="0" width="13" height="13" fill="#fff"/>
<rect x="0" y="0" width="12" height="1" fill="#a0a0a0"/><rect x="0" y="0" width="1" height="12" fill="#a0a0a0"/>
<rect x="1" y="1" width="10" height="1" fill="#696969"/><rect x="1" y="1" width="1" height="10" fill="#696969"/>
<rect x="1" y="11" width="11" height="1" fill="#e3e3e3"/><rect x="11" y="1" width="1" height="11" fill="#e3e3e3"/>
<g transform="translate(3,3)"><path d="M0 2h1v3h-1zM1 3h1v3h-1zM2 4h1v3h-1zM3 3h1v3h-1zM4 2h1v3h-1zM5 1h1v3h-1zM6 0h1v3h-1z" fill="#000"/></g>
</svg>
<svg style="position:absolute;left:784px;top:387px" width="13" height="13" viewBox="0 0 13 13">
<rect x="0" y="0" width="13" height="13" fill="#fff"/>
<rect x="0" y="0" width="12" height="1" fill="#a0a0a0"/><rect x="0" y="0" width="1" height="12" fill="#a0a0a0"/>
<rect x="1" y="1" width="10" height="1" fill="#696969"/><rect x="1" y="1" width="1" height="10" fill="#696969"/>
<rect x="1" y="11" width="11" height="1" fill="#e3e3e3"/><rect x="11" y="1" width="1" height="11" fill="#e3e3e3"/>
<g transform="translate(3,3)"><path d="M0 2h1v3h-1zM1 3h1v3h-1zM2 4h1v3h-1zM3 3h1v3h-1zM4 2h1v3h-1zM5 1h1v3h-1zM6 0h1v3h-1z" fill="#000"/></g>
</svg>
<svg style="position:absolute;left:884px;top:387px" width="13" height="13" viewBox="0 0 13 13">
<rect x="0" y="0" width="13" height="13" fill="#fff"/>
<rect x="0" y="0" width="12" height="1" fill="#a0a0a0"/><rect x="0" y="0" width="1" height="12" fill="#a0a0a0"/>
<rect x="1" y="1" width="10" height="1" fill="#696969"/><rect x="1" y="1" width="1" height="10" fill="#696969"/>
<rect x="1" y="11" width="11" height="1" fill="#e3e3e3"/><rect x="11" y="1" width="1" height="11" fill="#e3e3e3"/>
<g transform="translate(3,3)"><path d="M0 2h1v3h-1zM1 3h1v3h-1zM2 4h1v3h-1zM3 3h1v3h-1zM4 2h1v3h-1zM5 1h1v3h-1zM6 0h1v3h-1z" fill="#000"/></g>
</svg>
<div style="position:absolute;left:40px;top:405px;width:900px;height:22px;background:#fff"></div>
<div style="position:absolute;left:40px;top:405px;width:1px;height:22px;background:#a0a0a0"></div>
<div style="position:absolute;left:140px;top:405px;width:1px;height:22px;background:#a0a0a0"></div>
<div style="position:absolute;left:240px;top:405px;width:1px;height:22px;background:#a0a0a0"></div>
<div style="position:absolute;left:340px;top:405px;width:1px;height:22px;background:#a0a0a0"></div>
<div style="position:absolute;left:440px;top:405px;width:1px;height:22px;background:#a0a0a0"></div>
<div style="position:absolute;left:540px;top:405px;width:1px;height:22px;background:#a0a0a0"></div>
<div style="position:absolute;left:640px;top:405px;width:1px;height:22px;background:#a0a0a0"></div>
<div style="position:absolute;left:740px;top:405px;width:1px;height:22px;background:#a0a0a0"></div>
<div style="position:absolute;left:840px;top:405px;width:1px;height:22px;background:#a0a0a0"></div>
</div>
<div style="position:absolute;left:1129px;top:192px;width:17px;height:407px;background:repeating-conic-gradient(#f0f0f0 0 25%,#ffffff 0 50%) 0 0/2px 2px"></div>
<div style="position:absolute;left:1129px;top:192px;width:17px;height:17px;background:#f0f0f0"></div>
<div style="position:absolute;left:1129px;top:192px;width:16px;height:1px;background:#e3e3e3"></div>
<div style="position:absolute;left:1129px;top:192px;width:1px;height:16px;background:#e3e3e3"></div>
<div style="position:absolute;left:1130px;top:193px;width:14px;height:1px;background:#fff"></div>
<div style="position:absolute;left:1130px;top:193px;width:1px;height:14px;background:#fff"></div>
<div style="position:absolute;left:1130px;top:207px;width:15px;height:1px;background:#a0a0a0"></div>
<div style="position:absolute;left:1144px;top:193px;width:1px;height:15px;background:#a0a0a0"></div>
<div style="position:absolute;left:1129px;top:208px;width:17px;height:1px;background:#696969"></div>
<div style="position:absolute;left:1145px;top:192px;width:1px;height:17px;background:#696969"></div>
<div style="position:absolute;left:1129px;top:209px;width:17px;height:318px;background:#f0f0f0"></div>
<div style="position:absolute;left:1129px;top:209px;width:16px;height:1px;background:#e3e3e3"></div>
<div style="position:absolute;left:1129px;top:209px;width:1px;height:317px;background:#e3e3e3"></div>
<div style="position:absolute;left:1130px;top:210px;width:14px;height:1px;background:#fff"></div>
<div style="position:absolute;left:1130px;top:210px;width:1px;height:315px;background:#fff"></div>
<div style="position:absolute;left:1130px;top:525px;width:15px;height:1px;background:#a0a0a0"></div>
<div style="position:absolute;left:1144px;top:210px;width:1px;height:316px;background:#a0a0a0"></div>
<div style="position:absolute;left:1129px;top:526px;width:17px;height:1px;background:#696969"></div>
<div style="position:absolute;left:1145px;top:209px;width:1px;height:318px;background:#696969"></div>
<div style="position:absolute;left:1129px;top:582px;width:17px;height:17px;background:#f0f0f0"></div>
<div style="position:absolute;left:1129px;top:582px;width:16px;height:1px;background:#e3e3e3"></div>
<div style="position:absolute;left:1129px;top:582px;width:1px;height:16px;background:#e3e3e3"></div>
<div style="position:absolute;left:1130px;top:583px;width:14px;height:1px;background:#fff"></div>
<div style="position:absolute;left:1130px;top:583px;width:1px;height:14px;background:#fff"></div>
<div style="position:absolute;left:1130px;top:597px;width:15px;height:1px;background:#a0a0a0"></div>
<div style="position:absolute;left:1144px;top:583px;width:1px;height:15px;background:#a0a0a0"></div>
<div style="position:absolute;left:1129px;top:598px;width:17px;height:1px;background:#696969"></div>
<div style="position:absolute;left:1145px;top:582px;width:1px;height:17px;background:#696969"></div>
<svg style="position:absolute;left:1134px;top:197px" width="8" height="6" viewBox="0 0 8 6"><path d="M0 5 L3.5 1 L7 5 Z" fill="#000"/></svg>
<svg style="position:absolute;left:1134px;top:588px" width="8" height="5" viewBox="0 0 8 5"><path d="M0 0.5 L3.5 4.5 L7 0.5 Z" fill="#000"/></svg>
<div style="position:absolute;left:237px;top:599px;width:892px;height:17px;background:repeating-conic-gradient(#f0f0f0 0 25%,#ffffff 0 50%) 0 0/2px 2px"></div>
<div style="position:absolute;left:237px;top:599px;width:17px;height:17px;background:#f0f0f0"></div>
<div style="position:absolute;left:237px;top:599px;width:16px;height:1px;background:#e3e3e3"></div>
<div style="position:absolute;left:237px;top:599px;width:1px;height:16px;background:#e3e3e3"></div>
<div style="position:absolute;left:238px;top:600px;width:14px;height:1px;background:#fff"></div>
<div style="position:absolute;left:238px;top:600px;width:1px;height:14px;background:#fff"></div>
<div style="position:absolute;left:238px;top:614px;width:15px;height:1px;background:#a0a0a0"></div>
<div style="position:absolute;left:252px;top:600px;width:1px;height:15px;background:#a0a0a0"></div>
<div style="position:absolute;left:237px;top:615px;width:17px;height:1px;background:#696969"></div>
<div style="position:absolute;left:253px;top:599px;width:1px;height:17px;background:#696969"></div>
<div style="position:absolute;left:254px;top:599px;width:810px;height:17px;background:#f0f0f0"></div>
<div style="position:absolute;left:254px;top:599px;width:809px;height:1px;background:#e3e3e3"></div>
<div style="position:absolute;left:254px;top:599px;width:1px;height:16px;background:#e3e3e3"></div>
<div style="position:absolute;left:255px;top:600px;width:807px;height:1px;background:#fff"></div>
<div style="position:absolute;left:255px;top:600px;width:1px;height:14px;background:#fff"></div>
<div style="position:absolute;left:255px;top:614px;width:808px;height:1px;background:#a0a0a0"></div>
<div style="position:absolute;left:1062px;top:600px;width:1px;height:15px;background:#a0a0a0"></div>
<div style="position:absolute;left:254px;top:615px;width:810px;height:1px;background:#696969"></div>
<div style="position:absolute;left:1063px;top:599px;width:1px;height:17px;background:#696969"></div>
<div style="position:absolute;left:1112px;top:599px;width:17px;height:17px;background:#f0f0f0"></div>
<div style="position:absolute;left:1112px;top:599px;width:16px;height:1px;background:#e3e3e3"></div>
<div style="position:absolute;left:1112px;top:599px;width:1px;height:16px;background:#e3e3e3"></div>
<div style="position:absolute;left:1113px;top:600px;width:14px;height:1px;background:#fff"></div>
<div style="position:absolute;left:1113px;top:600px;width:1px;height:14px;background:#fff"></div>
<div style="position:absolute;left:1113px;top:614px;width:15px;height:1px;background:#a0a0a0"></div>
<div style="position:absolute;left:1127px;top:600px;width:1px;height:15px;background:#a0a0a0"></div>
<div style="position:absolute;left:1112px;top:615px;width:17px;height:1px;background:#696969"></div>
<div style="position:absolute;left:1128px;top:599px;width:1px;height:17px;background:#696969"></div>
<svg style="position:absolute;left:242px;top:604px" width="5" height="8" viewBox="0 0 5 8"><path d="M4.5 0 L0.5 3.5 L4.5 7 Z" fill="#000"/></svg>
<svg style="position:absolute;left:1119px;top:604px" width="5" height="8" viewBox="0 0 5 8"><path d="M0.5 0 L4.5 3.5 L0.5 7 Z" fill="#000"/></svg>
<div style="position:absolute;left:1129px;top:599px;width:17px;height:17px;background:#f0f0f0"></div>
<div style="position:absolute;left:0px;top:700px;width:1366px;height:28px;background:#f0f0f0"></div>
<div style="position:absolute;left:2px;top:702px;width:132px;height:22px;background:#f5f3ef"></div>
<div style="position:absolute;left:2px;top:702px;width:131px;height:1px;background:#808080"></div>
<div style="position:absolute;left:2px;top:702px;width:1px;height:21px;background:#808080"></div>
<div style="position:absolute;left:3px;top:703px;width:130px;height:1px;background:#a8a8a8"></div>
<div style="position:absolute;left:3px;top:703px;width:1px;height:20px;background:#a8a8a8"></div>
<div style="position:absolute;left:2px;top:723px;width:132px;height:1px;background:#fff"></div>
<div style="position:absolute;left:133px;top:702px;width:1px;height:22px;background:#fff"></div>
<div style="position:absolute;left:137px;top:702px;width:400px;height:22px;background:#f5f3ef"></div>
<div style="position:absolute;left:137px;top:702px;width:399px;height:1px;background:#808080"></div>
<div style="position:absolute;left:137px;top:702px;width:1px;height:21px;background:#808080"></div>
<div style="position:absolute;left:138px;top:703px;width:398px;height:1px;background:#a8a8a8"></div>
<div style="position:absolute;left:138px;top:703px;width:1px;height:20px;background:#a8a8a8"></div>
<div style="position:absolute;left:137px;top:723px;width:400px;height:1px;background:#fff"></div>
<div style="position:absolute;left:536px;top:702px;width:1px;height:22px;background:#fff"></div>
<div style="position:absolute;left:538px;top:702px;width:694px;height:22px;background:#f5f3ef"></div>
<div style="position:absolute;left:538px;top:702px;width:693px;height:1px;background:#808080"></div>
<div style="position:absolute;left:538px;top:702px;width:1px;height:21px;background:#808080"></div>
<div style="position:absolute;left:539px;top:703px;width:692px;height:1px;background:#a8a8a8"></div>
<div style="position:absolute;left:539px;top:703px;width:1px;height:20px;background:#a8a8a8"></div>
<div style="position:absolute;left:538px;top:723px;width:694px;height:1px;background:#fff"></div>
<div style="position:absolute;left:1231px;top:702px;width:1px;height:22px;background:#fff"></div>
<div style="position:absolute;left:1263px;top:702px;width:87px;height:22px;background:#f5f3ef"></div>
<div style="position:absolute;left:1263px;top:702px;width:86px;height:1px;background:#808080"></div>
<div style="position:absolute;left:1263px;top:702px;width:1px;height:21px;background:#808080"></div>
<div style="position:absolute;left:1264px;top:703px;width:85px;height:1px;background:#a8a8a8"></div>
<div style="position:absolute;left:1264px;top:703px;width:1px;height:20px;background:#a8a8a8"></div>
<div style="position:absolute;left:1263px;top:723px;width:87px;height:1px;background:#fff"></div>
<div style="position:absolute;left:1349px;top:702px;width:1px;height:22px;background:#fff"></div>
<svg style="position:absolute;left:1237px;top:707px" width="24" height="14" viewBox="0 0 24 14">
<defs><linearGradient id="im1" x1="0" y1="0" x2="1" y2="1"><stop offset="0" stop-color="#ffffff"/><stop offset="1" stop-color="#b8ccf0"/></linearGradient>
<linearGradient id="im2" x1="0" y1="0" x2="1" y2="1"><stop offset="0" stop-color="#c8d8f8"/><stop offset="0.5" stop-color="#4a78d0"/><stop offset="1" stop-color="#102c80"/></linearGradient></defs>
<rect x="0.5" y="0.5" width="13" height="13" fill="url(#im1)" stroke="#2a54b0" stroke-width="1"/>
<path d="M1 12.5 V10.5 L5 6.5 L7.5 8 L9 7.5 L13 11.5 V13 H1 Z" fill="url(#im2)"/>
<path d="M1.5 10 L5 6.3 L7.5 8.2 M8.5 7.7 L13 11.8" fill="none" stroke="#1a3a90" stroke-width="0.9"/>
<circle cx="9.2" cy="4" r="1.9" fill="#9ab8f0" stroke="#2a5ac0" stroke-width="0.9"/>
<path d="M17 6 H22 L19.5 9 Z" fill="#000"/>
</svg>
<div class="t" style="left:626.73px;top:-8px;font-size:15px;color:#000;transform:scaleX(0.9684);">- [Leave Request]</div>
<div class="t" style="left:35.92px;top:18px;font-size:15px;color:#000;transform:scaleX(0.9783);">File</div>
<div class="t" style="left:80.53px;top:18px;font-size:15px;color:#000;transform:scaleX(0.9678);">Human Resource</div>
<div class="t" style="left:214.30px;top:18px;font-size:15px;color:#000;transform:scaleX(0.9697);">Time Sheet</div>
<div class="t" style="left:307.99px;top:18px;font-size:15px;color:#000;transform:scaleX(1.0136);">Payroll</div>
<div class="t" style="left:374.20px;top:18px;font-size:15px;color:#000;transform:scaleX(1.0038);">Settings</div>
<div class="t" style="left:447.93px;top:18px;font-size:15px;color:#000;transform:scaleX(0.9698);">Security</div>
<div class="t" style="left:521.21px;top:18px;font-size:15px;color:#000;transform:scaleX(0.9902);">Reports</div>
<div class="t" style="left:592.74px;top:18px;font-size:15px;color:#000;transform:scaleX(1.0638);">Integration</div>
<div class="t" style="left:687.21px;top:18px;font-size:15px;color:#000;transform:scaleX(0.9878);">Labour Laws and Regulation</div>
<div class="t" style="left:895.50px;top:18px;font-size:15px;color:#000;transform:scaleX(1.0250);">Windows</div>
<div class="t" style="left:976.91px;top:18px;font-size:15px;color:#000;transform:scaleX(1.0931);">Help</div>
<div class="t" style="left:42.71px;top:50px;font-size:15px;color:#000;transform:scaleX(0.9887);">Manage Employee</div>
<div class="t" style="left:215.35px;top:50px;font-size:15px;color:#000;transform:scaleX(0.9470);">Leave Request</div>
<div class="t" style="left:359.30px;top:50px;font-size:15px;color:#000;">Leave Approval</div>
<div class="t" style="left:505.82px;top:50px;font-size:15px;color:#000;transform:scaleX(0.9836);">Employee Travel</div>
<div class="t" style="left:658.62px;top:50px;font-size:15px;color:#000;transform:scaleX(0.9796);">Employee Loan</div>
<div class="t" style="left:803.51px;top:50px;font-size:15px;color:#000;transform:scaleX(0.9858);">Document Request</div>
<div class="t" style="left:972.60px;top:50px;font-size:15px;color:#000;transform:scaleX(0.9959);">Employee Complaints</div>
<div class="t" style="left:1166.24px;top:50px;font-size:15px;color:#000;transform:scaleX(0.9636);">User Privileges</div>
<div class="t" style="left:7.31px;top:695px;font-size:15px;color:#000;transform:scaleX(0.9862);">User Name: admin</div>
<div class="t" style="left:542.27px;top:695px;font-size:15px;color:#000;transform:scaleX(0.9302);">Ready...</div>
<div class="t" style="left:1269.97px;top:695px;font-size:15px;color:#000;transform:scaleX(1.0270);">04/09/2014</div>
<div class="t" style="left:207.52px;top:96px;font-size:11px;color:#000;transform:scaleX(0.9817);">Leave Request List</div>
<div class="t" style="left:234.35px;top:142px;font-size:11px;color:#000;transform:scaleX(0.9462);">Employee Name</div>
<div class="t" style="left:612.60px;top:142px;font-size:11px;color:#000;transform:scaleX(0.9636);">Year</div>
<div class="t" style="left:970.35px;top:147px;font-size:11px;color:#000;transform:scaleX(0.9519);">Show</div>
<div class="t" style="left:1055.42px;top:147px;font-size:11px;color:#000;transform:scaleX(0.9760);">Clear</div>
<div class="t" style="left:514.21px;top:620px;font-size:11px;color:#000;transform:scaleX(0.9867);">New Leave Request</div>
<div class="t" style="left:644.61px;top:619px;font-size:11px;color:#000;transform:scaleX(0.9871);">Delete</div>
<div class="t" style="left:719.32px;top:619px;font-size:11px;color:#000;transform:scaleX(0.9829);">Show All</div>
<div class="t" style="left:810.34px;top:619px;font-size:11px;color:#000;transform:scaleX(0.9593);">Close</div>
</body></html>
